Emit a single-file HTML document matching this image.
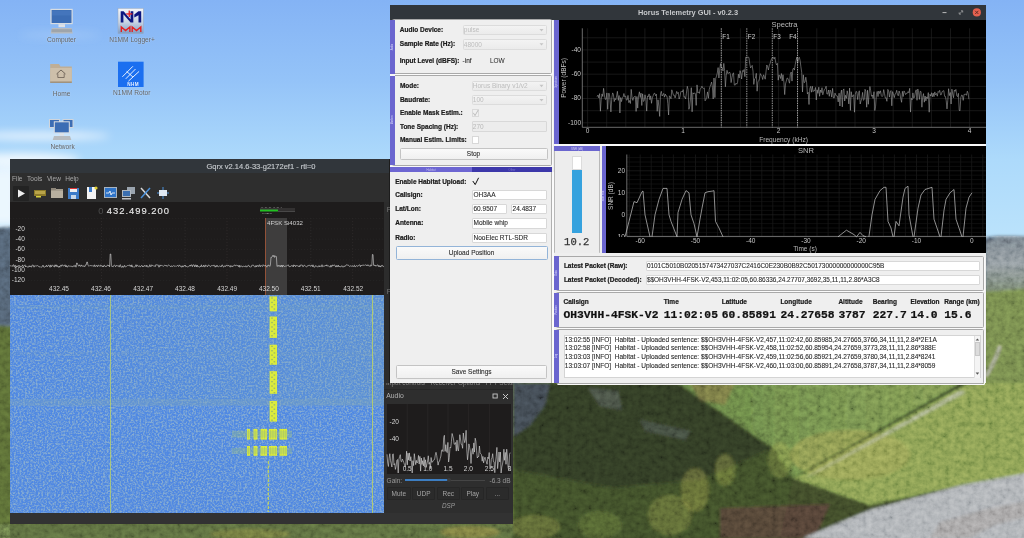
<!DOCTYPE html>
<html><head><meta charset="utf-8">
<style>
*{margin:0;padding:0;box-sizing:border-box}
html,body{width:1024px;height:538px;overflow:hidden;font-family:"Liberation Sans",sans-serif;}
body{position:relative;background:#86b6ee}
.a{position:absolute}
.t{position:absolute;white-space:nowrap;line-height:1}
svg{position:absolute;left:0;top:0}
</style></head><body>
<svg width="1024" height="538" viewBox="0 0 1024 538">
<defs>
<linearGradient id="sky" x1="0" y1="0" x2="0" y2="538" gradientUnits="userSpaceOnUse">
<stop offset="0" stop-color="#84b3f5"/><stop offset="0.149" stop-color="#94c3f8"/><stop offset="0.297" stop-color="#addafb"/><stop offset="0.437" stop-color="#bae2fb"/>
</linearGradient>
<filter id="blur1"><feGaussianBlur stdDeviation="1.8"/></filter>
<filter id="blur6" x="-50%" y="-300%" width="200%" height="700%"><feGaussianBlur stdDeviation="4"/></filter>
<filter id="tex" x="0" y="0" width="100%" height="100%"><feTurbulence type="fractalNoise" baseFrequency="0.25" numOctaves="3" seed="9"/>
<feColorMatrix values="0 0 0 0 0  0 0 0 0 0  0 0 0 0 0  0 0 0 -2.2 1.35"/></filter>
</defs>
<rect width="1024" height="538" fill="url(#sky)"/>
<g filter="url(#blur6)">
<ellipse cx="40" cy="136" rx="70" ry="4" fill="#ffffff" opacity="0.7"/>
<ellipse cx="20" cy="160" rx="60" ry="7" fill="#ffffff" opacity="0.8"/>
<rect x="-10" y="168" width="28" height="58" fill="#eef8fe" opacity="0.95"/>

<ellipse cx="60" cy="35" rx="40" ry="3" fill="#e0eefc" opacity="0.25"/>
</g>
<g filter="url(#blur1)">
<polygon points="-10,228 60,224 200,240 384,250 600,250 900,244 960,240 1000,236 1034,237 1034,548 -10,548" fill="#4e5c6c"/>
<polygon points="-10,325 300,345 513,383 986,290 1034,287 1034,548 -10,548" fill="#556633"/>
<linearGradient id="mtn" x1="0" y1="236" x2="0" y2="292" gradientUnits="userSpaceOnUse"><stop offset="0" stop-color="#6e7882"/><stop offset="0.5" stop-color="#8a949a"/><stop offset="1" stop-color="#6f7c68"/></linearGradient><polygon points="986,242 1000,236 1034,237 1034,289 986,292" fill="url(#mtn)"/>
<polygon points="986,292 1034,288 1034,383 986,383" fill="#6f8348"/>
<path d="M1000,346 Q996,360 986,376" stroke="#b8b8a8" stroke-width="2.5" fill="none"/>
<polygon points="513,383 1034,383 1034,548 513,548" fill="#3a4528"/>
<linearGradient id="lit" x1="678" y1="0" x2="1000" y2="0" gradientUnits="userSpaceOnUse"><stop offset="0" stop-color="#5e7840"/><stop offset="1" stop-color="#7a924e"/></linearGradient>
<polygon points="513,383 678,383 773,448 700,480 613,488 513,470" fill="#2e3823"/>
<polygon points="513,383 550,383 545,405 530,425 513,437" fill="#3c444e"/>
<polygon points="588,388 618,391 622,410 600,406" fill="#5a6264" opacity="0.5"/>
<polygon points="640,420 690,431 686,440 645,431" fill="#535a58" opacity="0.5"/>
<polygon points="678,383 965,383 793,478 773,448" fill="url(#lit)"/>
<polygon points="690,383 735,383 725,405 700,400" fill="#7a6a40" opacity="0.6"/>
<polygon points="965,383 1034,383 1034,473 963,485 870,505 793,478" fill="#80964e"/>
<polygon points="513,470 613,488 700,480 773,448 793,478 780,538 513,538" fill="#3a4a28"/>
<ellipse cx="695" cy="490" rx="14" ry="22" fill="#8a8a40" opacity="0.45"/><ellipse cx="670" cy="515" rx="22" ry="20" fill="#8a8a40" opacity="0.4"/><ellipse cx="725" cy="470" rx="10" ry="16" fill="#8e9444" opacity="0.4"/><ellipse cx="780" cy="460" rx="12" ry="18" fill="#8e9444" opacity="0.35"/>
<ellipse cx="535" cy="527" rx="25" ry="12" fill="#7e803c" opacity="0.45"/>
<ellipse cx="600" cy="525" rx="22" ry="14" fill="#6e7a38" opacity="0.4"/>
<ellipse cx="850" cy="455" rx="60" ry="25" fill="#9a9c50" opacity="0.5"/>
<polygon points="793,478 799,476 968,383 961,383" fill="#2a3620"/>
<polygon points="805,478 812,475 966,392 960,391" fill="#c0c0ac" opacity="0.7"/>
<polygon points="720,508 830,504 815,538 720,538" fill="#553c34" opacity="0.75"/>
<polygon points="803,538 870,510 963,485 1034,472 1034,548" fill="#a8acb0"/>
<polygon points="940,522 990,508 1034,500 1034,515 995,525 970,538 930,538" fill="#8a7a70" opacity="0.3"/>
<polygon points="-10,524 513,524 513,548 -10,548" fill="#56663a"/><ellipse cx="250" cy="534" rx="40" ry="5" fill="#7a7a3a" opacity="0.6"/><ellipse cx="470" cy="532" rx="30" ry="6" fill="#8a8040" opacity="0.6"/>
</g>
<filter id="tex2" x="0" y="0" width="100%" height="100%"><feTurbulence type="fractalNoise" baseFrequency="0.18" numOctaves="3" seed="3"/><feColorMatrix type="saturate" values="0"/><feComponentTransfer><feFuncR type="linear" slope="1.6" intercept="-0.3"/><feFuncG type="linear" slope="1.6" intercept="-0.3"/><feFuncB type="linear" slope="1.6" intercept="-0.3"/><feFuncA type="linear" slope="0" intercept="1"/></feComponentTransfer></filter>
<rect x="513" y="383" width="511" height="155" filter="url(#tex2)" style="mix-blend-mode:overlay" opacity="0.32"/>
<rect x="0" y="225" width="10" height="313" filter="url(#tex2)" style="mix-blend-mode:overlay" opacity="0.28"/>
<rect x="986" y="236" width="38" height="147" filter="url(#tex2)" style="mix-blend-mode:overlay" opacity="0.28"/>
<rect x="0" y="524" width="513" height="14" filter="url(#tex2)" style="mix-blend-mode:overlay" opacity="0.3"/>
</svg>
<svg width="1024" height="538" style="pointer-events:none">
<defs><linearGradient id="n1g" x1="0" y1="0" x2="0" y2="1"><stop offset="0" stop-color="#f4f6fa"/><stop offset="0.55" stop-color="#c8d4e4"/><stop offset="1" stop-color="#7b9cc6"/></linearGradient></defs>
<rect x="50.4" y="8.8" width="22.3" height="15.4" fill="#d8dde2"/>
<rect x="51.6" y="10" width="19.9" height="13" fill="#3c6db4"/>
<rect x="52" y="10.5" width="19" height="5" fill="#4a7cc2" opacity="0.6"/>
<rect x="58.5" y="24.2" width="6.5" height="3" fill="#dfe2e6"/>
<polygon points="52,28 71.5,28 72.8,33.5 50.6,33.5" fill="#b8bcc0"/>
<rect x="51.5" y="29.2" width="20.5" height="3" fill="#9ea4aa"/>
<rect x="118" y="8.4" width="25.3" height="25.1" fill="url(#n1g)" stroke="#9aa8bc" stroke-width="0.5"/>
<path d="M120.7,22.6 L120.7,11.3 L123.6,11.3 L130.6,19.6 L130.6,11.3 L133.3,11.3 L133.3,22.6 L130.6,22.6 L123.4,14.2 L123.4,22.6 Z" fill="#0c1680"/>
<path d="M134.3,14.6 L138.4,11.3 L141.2,11.3 L141.2,22.6 L138.5,22.6 L138.5,15.2 L134.3,17.4 Z" fill="#0c1680"/>
<rect x="126.2" y="13.3" width="6.2" height="1.3" fill="#e52020"/><rect x="128.6" y="10.6" width="1.3" height="6.4" fill="#e52020"/>
<polyline points="121.3,32 121.3,27 125.6,30.5 129.9,27 129.9,32" stroke="#e52020" stroke-width="1.4" fill="none"/>
<polyline points="132.2,32 132.2,27 136.5,30.5 140.8,27 140.8,32" stroke="#e52020" stroke-width="1.4" fill="none"/>
<polygon points="50.2,64 59,64 60.5,66.5 71.8,66.5 71.8,82.7 50.2,82.7" fill="#bfae96"/>
<rect x="50.2" y="68" width="21.6" height="14.7" fill="#cdbfaa"/>
<rect x="50.2" y="81.6" width="21.6" height="1.1" fill="#8f7f6a"/>
<polyline points="56.5,74 61,70 65.5,74" stroke="#5b5048" stroke-width="0.8" fill="none"/>
<polyline points="57.8,73.5 57.8,77.5 64.2,77.5 64.2,73.5" stroke="#5b5048" stroke-width="0.7" fill="none"/>
<rect x="118" y="61.7" width="25.6" height="25.3" fill="#1b6ff0"/>
<g stroke="#ffffff" stroke-width="0.9">
<line x1="122.4" y1="76.8" x2="132.9" y2="66.3"/><line x1="125.8" y1="78.8" x2="135.5" y2="69"/><line x1="128.4" y1="81.2" x2="139.1" y2="71.4"/>
<line x1="126.6" y1="71.4" x2="132.9" y2="77"/>
</g>
<text x="127.2" y="86.2" font-family="Liberation Sans" font-weight="bold" font-size="4.6" letter-spacing="0.5" fill="#e8f0ff">NHM</text>
<rect x="49" y="119" width="11" height="9" fill="#cfd5dc"/><rect x="50" y="120" width="9" height="7" fill="#3c6db4"/>
<rect x="62.5" y="119" width="11" height="9" fill="#cfd5dc"/><rect x="63.5" y="120" width="9" height="7" fill="#3c6db4"/>
<rect x="53.8" y="121.3" width="16" height="12" fill="#d9dde2"/><rect x="54.8" y="122.3" width="14" height="10" fill="#3c6db4"/>
<rect x="59.5" y="133.3" width="4.5" height="2.5" fill="#dfe2e6"/>
<polygon points="54,136 70,136 71.3,140 52.7,140" fill="#b8bcc0"/>
</svg>
<div class="t" style="left:61.50px;transform:translateX(-50%);top:37.16px;font-size:6.6px;color:#5f6266;font-family:'Liberation Sans', sans-serif;text-shadow:0 0 1.5px rgba(255,255,255,0.6);">Computer</div>
<div class="t" style="left:132.00px;transform:translateX(-50%);top:37.16px;font-size:6.6px;color:#5f6266;font-family:'Liberation Sans', sans-serif;text-shadow:0 0 1.5px rgba(255,255,255,0.6);">N1MM Logger+</div>
<div class="t" style="left:61.60px;transform:translateX(-50%);top:90.81px;font-size:6.6px;color:#5f6266;font-family:'Liberation Sans', sans-serif;text-shadow:0 0 1.5px rgba(255,255,255,0.6);">Home</div>
<div class="t" style="left:131.80px;transform:translateX(-50%);top:90.41px;font-size:6.6px;color:#5f6266;font-family:'Liberation Sans', sans-serif;text-shadow:0 0 1.5px rgba(255,255,255,0.6);">N1MM Rotor</div>
<div class="t" style="left:62.60px;transform:translateX(-50%);top:143.91px;font-size:6.6px;color:#5f6266;font-family:'Liberation Sans', sans-serif;text-shadow:0 0 1.5px rgba(255,255,255,0.6);">Network</div>
<div class="a" style="left:10px;top:159px;width:380px;height:365px;background:#2e2e2e"></div>
<div class="a" style="left:10px;top:159px;width:380px;height:14px;background:#31363b"></div>
<div class="t" style="left:206.50px;top:162.85px;font-size:7.5px;color:#c4c8cc;font-family:'Liberation Sans', sans-serif;-webkit-text-stroke:0.15px #c4c8cc;">Gqrx v2.14.6-33-g2172ef1 - rtl=0</div>
<div class="t" style="left:12.00px;top:176.00px;font-size:6.5px;color:#a9a9a9;font-family:'Liberation Sans', sans-serif;">File</div>
<div class="t" style="left:27.10px;top:176.00px;font-size:6.5px;color:#a9a9a9;font-family:'Liberation Sans', sans-serif;">Tools</div>
<div class="t" style="left:46.90px;top:176.00px;font-size:6.5px;color:#a9a9a9;font-family:'Liberation Sans', sans-serif;">View</div>
<div class="t" style="left:65.30px;top:176.00px;font-size:6.5px;color:#a9a9a9;font-family:'Liberation Sans', sans-serif;">Help</div>
<div class="a" style="left:13px;top:186px;width:16px;height:15px;background:#232323;border-radius:1px"></div>
<svg width="1024" height="538" style="pointer-events:none"><polygon points="18,189.5 18,197.5 25,193.5" fill="#eeeeee"/><rect x="34" y="190" width="12" height="6" fill="#8c7a2a"/><rect x="35" y="191" width="10" height="3" fill="#b9a44a"/><rect x="36" y="196" width="5" height="1.5" fill="#d8d040"/><rect x="51" y="189" width="12" height="9" fill="#a59d8e"/><rect x="51" y="188" width="5" height="2" fill="#8f877a"/><rect x="51" y="191" width="12" height="7" fill="#b8b0a0"/><rect x="68" y="188" width="11" height="11" fill="#3d7cc9"/><rect x="70" y="188" width="7" height="4" fill="#f0f0f0"/><rect x="70" y="188" width="7" height="1" fill="#d33"/><rect x="71" y="195" width="5" height="4" fill="#c8d8ea"/><rect x="87" y="187" width="9" height="12" fill="#f4f4f4"/><rect x="89" y="187" width="3" height="5" fill="#3d7cc9"/><circle cx="96" cy="188" r="1.6" fill="#e0d030"/><rect x="104" y="187" width="13" height="11" fill="#a8b4c0"/><rect x="105" y="188" width="11" height="9" fill="#2f74c8"/><polyline points="106,193 109,193 110,191 111,195 112,193 115,193" stroke="#fff" stroke-width="0.8" fill="none"/><rect x="127" y="187" width="8" height="7" fill="#9aa4ae"/><rect x="122" y="190" width="9" height="7" fill="#b0b8c0"/><rect x="123" y="191" width="7" height="5" fill="#3b6fb0"/><rect x="122" y="198" width="9" height="1.5" fill="#c0c4c8"/><line x1="141" y1="188" x2="150" y2="198" stroke="#d8d8d8" stroke-width="1.5"/><line x1="150" y1="188" x2="141" y2="198" stroke="#4a90d9" stroke-width="1.5"/><rect x="159" y="190" width="8" height="6" fill="#d8e4f0"/><line x1="163" y1="187" x2="163" y2="199" stroke="#4a90d9" stroke-width="1"/><line x1="157" y1="193" x2="169" y2="193" stroke="#4a90d9" stroke-width="1"/><rect x="159" y="190" width="8" height="6" fill="#dfe8f2"/></svg>
<div class="a" style="left:10px;top:202px;width:374px;height:93px;background:#1e1c1c"></div>
<div class="a" style="left:384px;top:202px;width:6px;height:322px;background:#2c2c2c"></div>
<div class="a" style="left:389px;top:159px;width:1px;height:365px;background:#1c1c1c"></div>
<div class="t" style="left:386.80px;top:206.50px;font-size:6.5px;color:#777;font-family:'Liberation Sans', sans-serif;">F</div>
<div class="t" style="left:386.80px;top:288.50px;font-size:6.5px;color:#777;font-family:'Liberation Sans', sans-serif;">P</div>
<div class="t" style="left:98.30px;top:206.04px;font-size:9.4px;color:#4c4c4c;font-family:'Liberation Sans', sans-serif;">0</div>
<div class="t" style="left:106.80px;top:206.04px;font-size:9.4px;color:#e6e6e6;font-family:'Liberation Sans', sans-serif;letter-spacing:1.0px;-webkit-text-stroke:0.15px #e6e6e6;">432.499.200</div>
<svg width="1024" height="538" style="pointer-events:none"><line x1="59.8" y1="218" x2="59.8" y2="284" stroke="#353333" stroke-width="0.6" stroke-dasharray="1.2,1.8"/><line x1="101.5" y1="218" x2="101.5" y2="284" stroke="#353333" stroke-width="0.6" stroke-dasharray="1.2,1.8"/><line x1="143.3" y1="218" x2="143.3" y2="284" stroke="#353333" stroke-width="0.6" stroke-dasharray="1.2,1.8"/><line x1="185.1" y1="218" x2="185.1" y2="284" stroke="#353333" stroke-width="0.6" stroke-dasharray="1.2,1.8"/><line x1="227" y1="218" x2="227" y2="284" stroke="#353333" stroke-width="0.6" stroke-dasharray="1.2,1.8"/><line x1="268.9" y1="218" x2="268.9" y2="284" stroke="#353333" stroke-width="0.6" stroke-dasharray="1.2,1.8"/><line x1="310.8" y1="218" x2="310.8" y2="284" stroke="#353333" stroke-width="0.6" stroke-dasharray="1.2,1.8"/><line x1="352.7" y1="218" x2="352.7" y2="284" stroke="#353333" stroke-width="0.6" stroke-dasharray="1.2,1.8"/><line x1="10" y1="218.4" x2="384" y2="218.4" stroke="#2a2828" stroke-width="0.6" stroke-dasharray="1.2,1.8"/><line x1="10" y1="228.8" x2="384" y2="228.8" stroke="#2a2828" stroke-width="0.6" stroke-dasharray="1.2,1.8"/><line x1="10" y1="239.1" x2="384" y2="239.1" stroke="#2a2828" stroke-width="0.6" stroke-dasharray="1.2,1.8"/><line x1="10" y1="249.5" x2="384" y2="249.5" stroke="#2a2828" stroke-width="0.6" stroke-dasharray="1.2,1.8"/><line x1="10" y1="259.9" x2="384" y2="259.9" stroke="#2a2828" stroke-width="0.6" stroke-dasharray="1.2,1.8"/><line x1="10" y1="270.2" x2="384" y2="270.2" stroke="#2a2828" stroke-width="0.6" stroke-dasharray="1.2,1.8"/><line x1="10" y1="280.6" x2="384" y2="280.6" stroke="#2a2828" stroke-width="0.6" stroke-dasharray="1.2,1.8"/><rect x="266" y="218" width="21" height="77" fill="#3e3d3d"/><line x1="265.5" y1="218" x2="265.5" y2="295" stroke="#b06040" stroke-width="0.8"/><rect x="260" y="209.5" width="18" height="2" fill="#22c022"/><line x1="278" y1="211.2" x2="295" y2="211.2" stroke="#888" stroke-width="0.6"/><line x1="260" y1="209" x2="295" y2="209" stroke="#888" stroke-width="0.4"/><polyline points="10.0,265.3 10.6,266.1 11.2,265.7 11.8,266.3 12.4,266.3 13.0,264.9 13.6,264.7 14.2,266.9 14.8,265.4 15.4,265.3 16.0,267.3 16.6,265.9 17.2,266.9 17.8,265.9 18.4,266.4 19.0,265.1 19.6,266.4 20.2,267.0 20.8,266.1 21.4,266.6 22.0,266.4 22.6,264.9 23.2,266.7 23.8,266.2 24.4,265.5 25.0,264.8 25.6,267.0 26.2,265.9 26.8,266.6 27.4,267.0 28.0,266.6 28.6,267.1 29.2,265.7 29.8,266.8 30.4,265.9 31.0,267.1 31.6,267.0 32.2,265.0 32.8,265.1 33.4,265.3 34.0,267.2 34.6,265.8 35.2,266.3 35.8,265.5 36.4,266.0 37.0,265.7 37.6,265.6 38.2,266.2 38.8,266.2 39.4,267.1 40.0,266.5 40.6,267.1 41.2,266.9 41.8,267.3 42.4,266.4 43.0,265.1 43.6,266.9 44.2,267.2 44.8,267.1 45.4,266.2 46.0,266.6 46.6,265.2 47.2,266.9 47.8,266.2 48.4,265.4 49.0,264.9 49.6,266.9 50.2,267.3 50.8,264.9 51.4,266.8 52.0,265.8 52.6,265.1 53.2,265.5 53.8,266.7 54.4,267.0 55.0,264.8 55.6,266.3 56.2,264.8 56.8,266.6 57.4,265.6 58.0,267.0 58.6,267.2 59.2,266.0 59.8,267.3 60.4,265.5 61.0,264.9 61.6,266.3 62.2,264.8 62.8,265.2 63.4,265.8 64.0,266.3 64.6,265.1 65.2,264.8 65.8,267.0 66.4,265.5 67.0,267.2 67.6,267.0 68.2,265.7 68.8,265.9 69.4,266.1 70.0,266.4 70.6,266.2 71.2,266.2 71.8,266.3 72.4,267.1 73.0,266.0 73.6,265.8 74.2,266.6 74.8,265.3 75.4,265.5 76.0,267.2 76.6,263.0 77.2,263.0 77.8,264.7 78.4,265.8 79.0,266.2 79.6,264.8 80.2,266.3 80.8,266.3 81.4,264.9 82.0,266.3 82.6,265.9 83.2,266.5 83.8,265.6 84.4,266.5 85.0,266.6 85.6,264.8 86.2,264.9 86.8,262.0 87.4,262.0 88.0,265.4 88.6,265.9 89.2,266.2 89.8,265.5 90.4,265.6 91.0,265.5 91.6,265.7 92.2,266.2 92.8,265.5 93.4,265.7 94.0,266.7 94.6,264.8 95.2,266.2 95.8,266.6 96.4,265.5 97.0,265.3 97.6,266.8 98.2,265.3 98.8,265.2 99.4,265.8 100.0,266.5 100.6,265.0 101.2,265.5 101.8,265.6 102.4,266.9 103.0,265.8 103.6,266.9 104.2,265.1 104.8,265.6 105.4,266.4 106.0,267.0 106.6,265.9 107.2,265.3 107.8,265.0 108.4,266.1 109.0,265.2 109.6,266.8 110.2,254.0 110.8,254.0 111.4,265.4 112.0,266.8 112.6,266.4 113.2,266.8 113.8,265.6 114.4,265.0 115.0,265.5 115.6,266.8 116.2,265.4 116.8,265.6 117.4,265.8 118.0,265.8 118.6,265.8 119.2,267.1 119.8,265.1 120.4,264.7 121.0,267.2 121.6,267.0 122.2,267.3 122.8,265.8 123.4,267.2 124.0,267.1 124.6,265.3 125.2,266.6 125.8,266.9 126.4,266.4 127.0,266.0 127.6,265.5 128.2,265.6 128.8,265.3 129.4,264.9 130.0,266.2 130.6,265.4 131.2,266.8 131.8,264.8 132.4,267.0 133.0,266.5 133.6,267.1 134.2,267.0 134.8,267.0 135.4,266.2 136.0,264.7 136.6,266.6 137.2,265.1 137.8,265.5 138.4,266.4 139.0,266.1 139.6,265.8 140.2,267.1 140.8,266.3 141.4,265.6 142.0,265.4 142.6,266.9 143.2,265.9 143.8,266.7 144.4,265.6 145.0,265.2 145.6,266.1 146.2,266.8 146.8,265.1 147.4,266.8 148.0,267.1 148.6,266.8 149.2,266.8 149.8,264.7 150.4,266.3 151.0,266.9 151.6,264.8 152.2,265.4 152.8,265.4 153.4,266.1 154.0,265.8 154.6,265.9 155.2,266.7 155.8,264.7 156.4,264.8 157.0,265.0 157.6,265.0 158.2,264.9 158.8,267.2 159.4,266.9 160.0,264.9 160.6,266.0 161.2,265.5 161.8,265.5 162.4,265.6 163.0,266.4 163.6,266.2 164.2,265.6 164.8,265.2 165.4,265.6 166.0,265.0 166.6,266.1 167.2,266.6 167.8,265.7 168.4,264.9 169.0,265.2 169.6,265.7 170.2,266.3 170.8,266.7 171.4,265.7 172.0,266.8 172.6,266.3 173.2,265.8 173.8,265.7 174.4,266.0 175.0,266.5 175.6,265.8 176.2,266.5 176.8,265.9 177.4,265.3 178.0,266.1 178.6,266.5 179.2,264.9 179.8,265.8 180.4,265.8 181.0,267.0 181.6,267.1 182.2,265.7 182.8,267.0 183.4,266.8 184.0,265.4 184.6,265.9 185.2,265.0 185.8,266.8 186.4,266.4 187.0,267.0 187.6,266.8 188.2,266.4 188.8,266.6 189.4,266.2 190.0,265.0 190.6,266.2 191.2,264.7 191.8,265.1 192.4,266.7 193.0,264.8 193.6,264.9 194.2,265.0 194.8,267.0 195.4,265.2 196.0,264.8 196.6,266.9 197.2,265.0 197.8,266.9 198.4,266.5 199.0,266.9 199.6,267.2 200.2,266.2 200.8,266.8 201.4,264.8 202.0,266.7 202.6,266.0 203.2,266.6 203.8,265.0 204.4,266.6 205.0,267.1 205.6,264.9 206.2,265.5 206.8,266.2 207.4,266.9 208.0,265.3 208.6,265.2 209.2,265.3 209.8,266.3 210.4,266.7 211.0,265.7 211.6,265.7 212.2,265.7 212.8,265.6 213.4,265.8 214.0,264.9 214.6,266.0 215.2,267.2 215.8,265.8 216.4,266.6 217.0,265.1 217.6,266.5 218.2,266.7 218.8,266.5 219.4,266.0 220.0,266.0 220.6,266.4 221.2,267.0 221.8,265.1 222.4,264.9 223.0,266.6 223.6,267.1 224.2,266.0 224.8,265.9 225.4,266.6 226.0,265.2 226.6,265.4 227.2,265.2 227.8,266.2 228.4,265.5 229.0,265.3 229.6,266.5 230.2,267.2 230.8,265.5 231.4,266.5 232.0,265.8 232.6,266.9 233.2,266.2 233.8,265.4 234.4,265.3 235.0,264.8 235.6,265.9 236.2,265.7 236.8,265.1 237.4,265.6 238.0,265.5 238.6,266.7 239.2,265.1 239.8,267.3 240.4,265.9 241.0,266.3 241.6,265.9 242.2,266.9 242.8,266.8 243.4,266.1 244.0,266.0 244.6,266.6 245.2,266.9 245.8,265.7 246.4,266.6 247.0,267.2 247.6,265.9 248.2,265.3 248.8,265.3 249.4,266.6 250.0,266.5 250.6,267.2 251.2,266.9 251.8,265.3 252.4,265.2 253.0,265.4 253.6,265.2 254.2,266.5 254.8,266.9 255.4,267.0 256.0,265.4 256.6,266.9 257.2,265.5 257.8,265.8 258.4,266.6 259.0,264.9 259.6,264.9 260.2,266.9 260.8,265.5 261.4,265.6 262.0,266.2 262.6,266.5 263.2,264.7 263.8,265.6 264.4,265.8 265.0,266.0 265.6,265.2 266.2,266.2 266.8,267.2 267.4,265.7 268.0,266.1 268.6,265.0 269.2,265.4 269.8,266.4 270.4,265.0 271.0,257.2 271.6,257.3 272.2,256.8 272.8,255.4 273.4,256.5 274.0,255.3 274.6,257.4 275.2,256.1 275.8,256.0 276.4,256.7 277.0,266.5 277.6,266.2 278.2,265.2 278.8,266.4 279.4,266.3 280.0,265.2 280.6,267.0 281.2,266.4 281.8,265.0 282.4,267.1 283.0,265.1 283.6,265.6 284.2,266.6 284.8,266.3 285.4,266.1 286.0,266.4 286.6,265.9 287.2,265.5 287.8,265.2 288.4,264.9 289.0,266.6 289.6,266.7 290.2,266.1 290.8,266.6 291.4,265.6 292.0,265.4 292.6,265.7 293.2,267.0 293.8,264.8 294.4,266.0 295.0,265.3 295.6,266.7 296.2,265.6 296.8,265.6 297.4,265.7 298.0,266.1 298.6,266.7 299.2,265.6 299.8,266.9 300.4,265.0 301.0,265.4 301.6,265.0 302.2,265.0 302.8,266.7 303.4,266.6 304.0,265.2 304.6,265.2 305.2,265.8 305.8,266.6 306.4,266.8 307.0,266.6 307.6,266.2 308.2,265.1 308.8,265.7 309.4,265.2 310.0,266.1 310.6,266.2 311.2,265.2 311.8,265.4 312.4,266.7 313.0,264.8 313.6,266.8 314.2,267.0 314.8,267.2 315.4,265.7 316.0,266.1 316.6,266.2 317.2,266.3 317.8,267.2 318.4,266.5 319.0,265.5 319.6,266.9 320.2,266.0 320.8,266.3 321.4,266.6 322.0,264.7 322.6,266.7 323.2,266.4 323.8,266.0 324.4,266.1 325.0,265.9 325.6,265.2 326.2,266.1 326.8,264.8 327.4,266.0 328.0,266.4 328.6,265.9 329.2,266.2 329.8,267.2 330.4,267.0 331.0,265.1 331.6,266.8 332.2,266.3 332.8,264.8 333.4,265.6 334.0,265.3 334.6,264.9 335.2,266.1 335.8,267.1 336.4,265.5 337.0,267.0 337.6,266.5 338.2,265.0 338.8,266.9 339.4,266.3 340.0,267.1 340.6,266.6 341.2,266.6 341.8,265.6 342.4,266.8 343.0,267.1 343.6,266.9 344.2,265.8 344.8,266.7 345.4,266.0 346.0,265.0 346.6,264.8 347.2,264.9 347.8,265.2 348.4,265.1 349.0,266.0 349.6,266.5 350.2,266.1 350.8,265.8 351.4,266.4 352.0,265.5 352.6,265.9 353.2,266.7 353.8,265.7 354.4,265.2 355.0,267.0 355.6,266.6 356.2,265.7 356.8,265.7 357.4,266.1 358.0,266.3 358.6,265.3 359.2,264.7 359.8,265.2 360.4,266.7 361.0,265.1 361.6,265.9 362.2,265.2 362.8,265.2 363.4,265.1 364.0,265.7 364.6,265.1 365.2,264.8 365.8,265.0 366.4,265.1 367.0,266.0 367.6,264.9 368.2,264.8 368.8,265.9 369.4,265.8 370.0,266.5 370.6,264.8 371.2,265.7 371.8,265.7 372.4,254.5 373.0,254.5 373.6,265.3 374.2,264.9 374.8,265.9 375.4,265.1 376.0,266.3 376.6,265.6 377.2,265.0 377.8,264.8 378.4,266.6 379.0,265.4 379.6,266.7 380.2,265.9 380.8,267.1 381.4,265.5 382.0,265.3 382.6,265.4 383.2,266.8 383.8,266.3" stroke="#d8d8d8" stroke-width="0.6" fill="none"/></svg>
<div class="t" style="left:260.00px;top:205.55px;font-size:2.3px;color:#999;font-family:'Liberation Sans', sans-serif;">-96 -86 -81 -41 -26 -1</div>
<div class="t" style="left:261.00px;top:212.88px;font-size:2.5px;color:#aaa;font-family:'Liberation Sans', sans-serif;">-47 dBFS</div>
<div class="t" style="left:267.00px;top:220.04px;font-size:6.1px;color:#d0d0d0;font-family:'Liberation Sans', sans-serif;">4FSK Si4032</div>
<div class="t" style="right:999.20px;top:225.60px;font-size:6.5px;color:#d6d6d6;font-family:'Liberation Sans', sans-serif;">-20</div>
<div class="t" style="right:999.20px;top:235.90px;font-size:6.5px;color:#d6d6d6;font-family:'Liberation Sans', sans-serif;">-40</div>
<div class="t" style="right:999.20px;top:246.30px;font-size:6.5px;color:#d6d6d6;font-family:'Liberation Sans', sans-serif;">-60</div>
<div class="t" style="right:999.20px;top:256.70px;font-size:6.5px;color:#d6d6d6;font-family:'Liberation Sans', sans-serif;">-80</div>
<div class="t" style="right:999.20px;top:267.00px;font-size:6.5px;color:#d6d6d6;font-family:'Liberation Sans', sans-serif;">-100</div>
<div class="t" style="right:999.20px;top:277.40px;font-size:6.5px;color:#d6d6d6;font-family:'Liberation Sans', sans-serif;">-120</div>
<div class="t" style="left:59.00px;transform:translateX(-50%);top:286.30px;font-size:6.5px;color:#d6d6d6;font-family:'Liberation Sans', sans-serif;">432.45</div>
<div class="t" style="left:101.00px;transform:translateX(-50%);top:286.30px;font-size:6.5px;color:#d6d6d6;font-family:'Liberation Sans', sans-serif;">432.46</div>
<div class="t" style="left:143.10px;transform:translateX(-50%);top:286.30px;font-size:6.5px;color:#d6d6d6;font-family:'Liberation Sans', sans-serif;">432.47</div>
<div class="t" style="left:185.00px;transform:translateX(-50%);top:286.30px;font-size:6.5px;color:#d6d6d6;font-family:'Liberation Sans', sans-serif;">432.48</div>
<div class="t" style="left:227.10px;transform:translateX(-50%);top:286.30px;font-size:6.5px;color:#d6d6d6;font-family:'Liberation Sans', sans-serif;">432.49</div>
<div class="t" style="left:268.90px;transform:translateX(-50%);top:286.30px;font-size:6.5px;color:#d6d6d6;font-family:'Liberation Sans', sans-serif;">432.50</div>
<div class="t" style="left:310.80px;transform:translateX(-50%);top:286.30px;font-size:6.5px;color:#d6d6d6;font-family:'Liberation Sans', sans-serif;">432.51</div>
<div class="t" style="left:353.20px;transform:translateX(-50%);top:286.30px;font-size:6.5px;color:#d6d6d6;font-family:'Liberation Sans', sans-serif;">432.52</div>
<svg width="1024" height="538" style="pointer-events:none"><defs><filter id="wn" x="0" y="0" width="100%" height="100%"><feTurbulence type="fractalNoise" baseFrequency="0.55" numOctaves="2" seed="4"/><feColorMatrix values="0 0 0 0 0.52  0 0 0 0 0.64  0 0 0 0 0.54  0 0 0 3 -1.2"/></filter><filter id="wb" x="0" y="0" width="100%" height="100%"><feGaussianBlur stdDeviation="0.5"/></filter><linearGradient id="wfg" x1="0" y1="0" x2="0" y2="1"><stop offset="0" stop-color="#5088e2"/><stop offset="0.5" stop-color="#5089e3"/><stop offset="1" stop-color="#5088e2"/></linearGradient></defs><rect x="10" y="295" width="374" height="218" fill="url(#wfg)"/><rect x="10" y="295" width="374" height="218" filter="url(#wn)" opacity="0.5"/><linearGradient id="wfr" x1="0" y1="0" x2="1" y2="0"><stop offset="0" stop-color="#6a9ab8" stop-opacity="0"/><stop offset="1" stop-color="#7aa4b0" stop-opacity="0.25"/></linearGradient><rect x="10" y="295" width="374" height="110" fill="url(#wfr)"/><rect x="10" y="399" width="374" height="7" fill="#7aa4c0" opacity="0.35"/><rect x="10" y="305" width="374" height="4" fill="#7aa4c0" opacity="0.2"/><rect x="10" y="352" width="374" height="4" fill="#7aa4c0" opacity="0.15"/><line x1="110.6" y1="295" x2="110.6" y2="513" stroke="#c8dc50" stroke-width="0.8" opacity="0.9"/><line x1="372.5" y1="295" x2="372.5" y2="513" stroke="#c8dc50" stroke-width="0.8" opacity="0.9"/><rect x="269.6" y="296.4" width="7.4" height="15.0" fill="#dcec3c"/><rect x="271.2" y="297.4" width="1.6" height="1.3" fill="#9cb868"/><rect x="273.6" y="299.6" width="1.6" height="1.3" fill="#9cb868"/><rect x="271.2" y="301.8" width="1.6" height="1.3" fill="#9cb868"/><rect x="273.6" y="304.0" width="1.6" height="1.3" fill="#9cb868"/><rect x="271.2" y="306.2" width="1.6" height="1.3" fill="#9cb868"/><rect x="273.6" y="308.4" width="1.6" height="1.3" fill="#9cb868"/><rect x="269.6" y="316.5" width="7.4" height="21.4" fill="#dcec3c"/><rect x="271.2" y="317.5" width="1.6" height="1.3" fill="#9cb868"/><rect x="273.6" y="319.7" width="1.6" height="1.3" fill="#9cb868"/><rect x="271.2" y="321.9" width="1.6" height="1.3" fill="#9cb868"/><rect x="273.6" y="324.1" width="1.6" height="1.3" fill="#9cb868"/><rect x="271.2" y="326.3" width="1.6" height="1.3" fill="#9cb868"/><rect x="273.6" y="328.5" width="1.6" height="1.3" fill="#9cb868"/><rect x="271.2" y="330.7" width="1.6" height="1.3" fill="#9cb868"/><rect x="273.6" y="332.9" width="1.6" height="1.3" fill="#9cb868"/><rect x="271.2" y="335.1" width="1.6" height="1.3" fill="#9cb868"/><rect x="269.6" y="344.7" width="7.4" height="20.1" fill="#dcec3c"/><rect x="271.2" y="345.7" width="1.6" height="1.3" fill="#9cb868"/><rect x="273.6" y="347.9" width="1.6" height="1.3" fill="#9cb868"/><rect x="271.2" y="350.1" width="1.6" height="1.3" fill="#9cb868"/><rect x="273.6" y="352.3" width="1.6" height="1.3" fill="#9cb868"/><rect x="271.2" y="354.5" width="1.6" height="1.3" fill="#9cb868"/><rect x="273.6" y="356.7" width="1.6" height="1.3" fill="#9cb868"/><rect x="271.2" y="358.9" width="1.6" height="1.3" fill="#9cb868"/><rect x="273.6" y="361.1" width="1.6" height="1.3" fill="#9cb868"/><rect x="271.2" y="363.3" width="1.6" height="1.3" fill="#9cb868"/><rect x="269.6" y="371.2" width="7.4" height="22.6" fill="#dcec3c"/><rect x="271.2" y="372.2" width="1.6" height="1.3" fill="#9cb868"/><rect x="273.6" y="374.4" width="1.6" height="1.3" fill="#9cb868"/><rect x="271.2" y="376.6" width="1.6" height="1.3" fill="#9cb868"/><rect x="273.6" y="378.8" width="1.6" height="1.3" fill="#9cb868"/><rect x="271.2" y="381.0" width="1.6" height="1.3" fill="#9cb868"/><rect x="273.6" y="383.2" width="1.6" height="1.3" fill="#9cb868"/><rect x="271.2" y="385.4" width="1.6" height="1.3" fill="#9cb868"/><rect x="273.6" y="387.6" width="1.6" height="1.3" fill="#9cb868"/><rect x="271.2" y="389.8" width="1.6" height="1.3" fill="#9cb868"/><rect x="273.6" y="392.0" width="1.6" height="1.3" fill="#9cb868"/><rect x="269.6" y="401" width="7.4" height="20.6" fill="#dcec3c"/><rect x="271.2" y="402.0" width="1.6" height="1.3" fill="#9cb868"/><rect x="273.6" y="404.2" width="1.6" height="1.3" fill="#9cb868"/><rect x="271.2" y="406.4" width="1.6" height="1.3" fill="#9cb868"/><rect x="273.6" y="408.6" width="1.6" height="1.3" fill="#9cb868"/><rect x="271.2" y="410.8" width="1.6" height="1.3" fill="#9cb868"/><rect x="273.6" y="413.0" width="1.6" height="1.3" fill="#9cb868"/><rect x="271.2" y="415.2" width="1.6" height="1.3" fill="#9cb868"/><rect x="273.6" y="417.4" width="1.6" height="1.3" fill="#9cb868"/><rect x="271.2" y="419.6" width="1.6" height="1.3" fill="#9cb868"/><rect x="247" y="428.9" width="3" height="10.7" fill="#dcec3c"/><rect x="248.2" y="429.9" width="0.7" height="8.7" fill="#a8c060" opacity="0.7"/><rect x="253.5" y="428.9" width="4.0" height="10.7" fill="#dcec3c"/><rect x="254.7" y="429.9" width="0.7" height="8.7" fill="#a8c060" opacity="0.7"/><rect x="260.5" y="428.9" width="6.5" height="10.7" fill="#dcec3c"/><rect x="261.7" y="429.9" width="0.7" height="8.7" fill="#a8c060" opacity="0.7"/><rect x="264.1" y="429.9" width="0.7" height="8.7" fill="#a8c060" opacity="0.7"/><rect x="269" y="428.9" width="8" height="10.7" fill="#dcec3c"/><rect x="270.2" y="429.9" width="0.7" height="8.7" fill="#a8c060" opacity="0.7"/><rect x="272.6" y="429.9" width="0.7" height="8.7" fill="#a8c060" opacity="0.7"/><rect x="275.0" y="429.9" width="0.7" height="8.7" fill="#a8c060" opacity="0.7"/><rect x="279.5" y="428.9" width="7.5" height="10.7" fill="#dcec3c"/><rect x="280.7" y="429.9" width="0.7" height="8.7" fill="#a8c060" opacity="0.7"/><rect x="283.1" y="429.9" width="0.7" height="8.7" fill="#a8c060" opacity="0.7"/><rect x="285.5" y="429.9" width="0.7" height="8.7" fill="#a8c060" opacity="0.7"/><rect x="232" y="430.9" width="60" height="6.7" fill="#9cc080" opacity="0.35"/><rect x="247" y="446" width="3" height="9.8" fill="#dcec3c"/><rect x="248.2" y="447" width="0.7" height="7.8" fill="#a8c060" opacity="0.7"/><rect x="253.5" y="446" width="4.0" height="9.8" fill="#dcec3c"/><rect x="254.7" y="447" width="0.7" height="7.8" fill="#a8c060" opacity="0.7"/><rect x="260.5" y="446" width="6.5" height="9.8" fill="#dcec3c"/><rect x="261.7" y="447" width="0.7" height="7.8" fill="#a8c060" opacity="0.7"/><rect x="264.1" y="447" width="0.7" height="7.8" fill="#a8c060" opacity="0.7"/><rect x="269" y="446" width="8" height="9.8" fill="#dcec3c"/><rect x="270.2" y="447" width="0.7" height="7.8" fill="#a8c060" opacity="0.7"/><rect x="272.6" y="447" width="0.7" height="7.8" fill="#a8c060" opacity="0.7"/><rect x="275.0" y="447" width="0.7" height="7.8" fill="#a8c060" opacity="0.7"/><rect x="279.5" y="446" width="7.5" height="9.8" fill="#dcec3c"/><rect x="280.7" y="447" width="0.7" height="7.8" fill="#a8c060" opacity="0.7"/><rect x="283.1" y="447" width="0.7" height="7.8" fill="#a8c060" opacity="0.7"/><rect x="285.5" y="447" width="0.7" height="7.8" fill="#a8c060" opacity="0.7"/><rect x="232" y="448" width="60" height="5.8" fill="#9cc080" opacity="0.35"/><line x1="268.3" y1="461" x2="268.3" y2="512" stroke="#d4e040" stroke-width="1" stroke-dasharray="3,1.5"/></svg>
<div class="a" style="left:10px;top:513px;width:380px;height:11px;background:#323232"></div>
<div class="a" style="left:384px;top:383px;width:129px;height:141px;background:#2e2e2e"></div>
<div class="a" style="left:384px;top:383px;width:129px;height:6px;overflow:hidden">
<div class="t" style="left:2px;top:-3.5px;font-size:6.5px;color:#8a8a8a">Input controls &nbsp; Receiver Options &nbsp; FFT Settings</div></div>
<div class="a" style="left:384px;top:389px;width:129px;height:1px;background:#262626"></div>
<div class="t" style="left:386.30px;top:393.04px;font-size:6.8px;color:#b4b4b4;font-family:'Liberation Sans', sans-serif;">Audio</div>
<svg width="1024" height="538" style="pointer-events:none"><rect x="493" y="394" width="4.2" height="4" fill="none" stroke="#c8c8c8" stroke-width="0.9"/><line x1="503" y1="394" x2="508" y2="399" stroke="#c8c8c8" stroke-width="1"/><line x1="508" y1="394" x2="503" y2="399" stroke="#c8c8c8" stroke-width="1"/></svg>
<div class="a" style="left:387px;top:404px;width:124px;height:69.5px;background:#1e1c1c"></div>
<svg width="1024" height="538" style="pointer-events:none"><line x1="407.2" y1="404" x2="407.2" y2="473" stroke="#2c2a2a" stroke-width="0.7"/><line x1="427.8" y1="404" x2="427.8" y2="473" stroke="#2c2a2a" stroke-width="0.7"/><line x1="448" y1="404" x2="448" y2="473" stroke="#2c2a2a" stroke-width="0.7"/><line x1="468.4" y1="404" x2="468.4" y2="473" stroke="#2c2a2a" stroke-width="0.7"/><line x1="489.4" y1="404" x2="489.4" y2="473" stroke="#2c2a2a" stroke-width="0.7"/><polyline points="387.0,454.3 387.7,463.1 388.4,466.5 389.1,458.2 389.8,453.7 390.5,460.6 391.2,463.6 391.9,467.0 392.6,454.3 393.3,453.9 394.0,464.9 394.7,463.6 395.4,469.4 396.1,466.4 396.8,460.4 397.5,459.5 398.2,473.0 398.9,459.4 399.6,456.7 400.3,454.7 401.0,461.5 401.7,461.8 402.4,459.1 403.1,460.7 403.8,462.5 404.5,464.8 405.2,467.0 405.9,462.2 406.6,451.2 407.3,464.9 408.0,453.2 408.7,460.1 409.4,452.9 410.1,461.0 410.8,456.7 411.5,462.2 412.2,473.0 412.9,460.7 413.6,465.6 414.3,453.7 415.0,459.4 415.7,464.6 416.4,460.4 417.1,463.0 417.8,461.5 418.5,455.4 419.2,464.0 419.9,456.4 420.6,471.1 421.3,458.0 422.0,464.5 422.7,460.7 423.4,465.9 424.1,457.3 424.8,466.1 425.5,459.8 426.2,467.4 426.9,463.8 427.6,461.0 428.3,455.8 429.0,464.2 429.7,462.4 430.4,468.7 431.1,457.5 431.8,462.4 432.5,462.0 433.2,460.5 433.9,459.9 434.6,459.5 435.3,454.9 436.0,452.3 436.7,455.4 437.4,460.4 438.1,465.1 438.8,461.6 439.5,461.3 440.2,458.5 440.9,456.0 441.6,450.2 442.3,449.7 443.0,451.6 443.7,437.6 444.4,435.3 445.1,451.4 445.8,444.7 446.5,451.3 447.2,452.6 447.9,442.4 448.6,462.0 449.3,457.5 450.0,447.1 450.7,447.9 451.4,441.7 452.1,433.5 452.8,436.2 453.5,438.9 454.2,444.3 454.9,444.1 455.6,442.5 456.3,451.1 457.0,440.2 457.7,449.1 458.4,451.0 459.1,443.2 459.8,434.7 460.5,439.0 461.2,444.3 461.9,444.4 462.6,448.3 463.3,433.0 464.0,438.2 464.7,442.7 465.4,440.2 466.1,430.3 466.8,449.9 467.5,459.8 468.2,453.7 468.9,443.9 469.6,447.3 470.3,451.1 471.0,463.5 471.7,452.6 472.4,448.4 473.1,454.2 473.8,442.9 474.5,452.1 475.2,438.2 475.9,441.2 476.6,450.8 477.3,458.0 478.0,456.5 478.7,456.5 479.4,446.0 480.1,452.8 480.8,453.9 481.5,454.7 482.2,461.2 482.9,456.4 483.6,462.9 484.3,459.2 485.0,457.2 485.7,459.9 486.4,461.8 487.1,464.3 487.8,457.1 488.5,458.6 489.2,452.5 489.9,469.0 490.6,468.3 491.3,459.4 492.0,457.8 492.7,453.7 493.4,461.5 494.1,461.8 494.8,472.7 495.5,462.1 496.2,456.5 496.9,447.4 497.6,468.6 498.3,461.9 499.0,452.0 499.7,461.9 500.4,452.1 501.1,473.0 501.8,467.1 502.5,464.1 503.2,460.0 503.9,449.2 504.6,460.3 505.3,452.4 506.0,464.3 506.7,449.2 507.4,456.0 508.1,467.7 508.8,470.0 509.5,454.5 510.2,452.6" stroke="#d8d8d8" stroke-width="0.6" fill="none"/></svg>
<div class="t" style="right:625.00px;top:419.20px;font-size:6.5px;color:#d6d6d6;font-family:'Liberation Sans', sans-serif;">-20</div>
<div class="t" style="right:625.00px;top:436.40px;font-size:6.5px;color:#d6d6d6;font-family:'Liberation Sans', sans-serif;">-40</div>
<div class="t" style="left:407.20px;transform:translateX(-50%);top:466.00px;font-size:6.5px;color:#d6d6d6;font-family:'Liberation Sans', sans-serif;">0.5</div>
<div class="t" style="left:427.80px;transform:translateX(-50%);top:466.00px;font-size:6.5px;color:#d6d6d6;font-family:'Liberation Sans', sans-serif;">1.0</div>
<div class="t" style="left:448.00px;transform:translateX(-50%);top:466.00px;font-size:6.5px;color:#d6d6d6;font-family:'Liberation Sans', sans-serif;">1.5</div>
<div class="t" style="left:468.40px;transform:translateX(-50%);top:466.00px;font-size:6.5px;color:#d6d6d6;font-family:'Liberation Sans', sans-serif;">2.0</div>
<div class="t" style="left:489.40px;transform:translateX(-50%);top:466.00px;font-size:6.5px;color:#d6d6d6;font-family:'Liberation Sans', sans-serif;">2.5</div>
<div class="t" style="left:509.50px;transform:translateX(-50%);top:466.00px;font-size:6.5px;color:#d6d6d6;font-family:'Liberation Sans', sans-serif;">3</div>
<div class="t" style="left:386.60px;top:477.50px;font-size:6.5px;color:#9a9a9a;font-family:'Liberation Sans', sans-serif;">Gain:</div>
<div class="a" style="left:405px;top:479.5px;width:80px;height:1.0px;background:#454545"></div>
<div class="a" style="left:405px;top:479.3px;width:44.39999999999998px;height:1.3999999999999773px;background:#3d7ec2"></div>
<div class="a" style="left:447px;top:478px;width:4px;height:4px;border-radius:2px;background:#3a3a3a"></div>
<div class="t" style="right:513.50px;top:477.50px;font-size:6.5px;color:#9a9a9a;font-family:'Liberation Sans', sans-serif;">-6.3 dB</div>
<div class="a" style="left:386.9px;top:486.8px;width:23.80000000000001px;height:13.099999999999966px;background:#2b2b2b;border:0.6px solid #262626;border-radius:1px"></div>
<div class="t" style="left:398.80px;transform:translateX(-50%);top:490.50px;font-size:6.5px;color:#a4a4a4;font-family:'Liberation Sans', sans-serif;">Mute</div>
<div class="a" style="left:412px;top:486.8px;width:23.30000000000001px;height:13.099999999999966px;background:#2b2b2b;border:0.6px solid #262626;border-radius:1px"></div>
<div class="t" style="left:423.65px;transform:translateX(-50%);top:490.50px;font-size:6.5px;color:#a4a4a4;font-family:'Liberation Sans', sans-serif;">UDP</div>
<div class="a" style="left:436.8px;top:486.8px;width:22.899999999999977px;height:13.099999999999966px;background:#2b2b2b;border:0.6px solid #262626;border-radius:1px"></div>
<div class="t" style="left:448.25px;transform:translateX(-50%);top:490.50px;font-size:6.5px;color:#a4a4a4;font-family:'Liberation Sans', sans-serif;">Rec</div>
<div class="a" style="left:461.2px;top:486.8px;width:23.19999999999999px;height:13.099999999999966px;background:#2b2b2b;border:0.6px solid #262626;border-radius:1px"></div>
<div class="t" style="left:472.80px;transform:translateX(-50%);top:490.50px;font-size:6.5px;color:#a4a4a4;font-family:'Liberation Sans', sans-serif;">Play</div>
<div class="a" style="left:485.5px;top:486.8px;width:23.80000000000001px;height:13.099999999999966px;background:#2b2b2b;border:0.6px solid #262626;border-radius:1px"></div>
<div class="t" style="left:497.40px;transform:translateX(-50%);top:490.50px;font-size:6.5px;color:#a4a4a4;font-family:'Liberation Sans', sans-serif;">...</div>
<div class="t" style="left:448.50px;transform:translateX(-50%);top:503.17px;font-size:6.3px;color:#9a9a9a;font-family:'Liberation Sans', sans-serif;font-style:italic;">DSP</div>
<div class="a" style="left:384px;top:513px;width:129px;height:11px;background:#323232"></div>
<div class="a" style="left:390px;top:5px;width:596px;height:378px;background:#efefef"></div>
<div class="a" style="left:390px;top:5px;width:596px;height:15px;background:#31363b"></div>
<div class="t" style="left:688.00px;transform:translateX(-50%);top:9.34px;font-size:7.4px;color:#c6c8cb;font-weight:bold;font-family:'Liberation Sans', sans-serif;">Horus Telemetry GUI - v0.2.3</div>
<svg width="1024" height="538" style="pointer-events:none"><line x1="942.5" y1="12.6" x2="946.5" y2="12.6" stroke="#c8c8c8" stroke-width="0.9"/><polyline points="959.2,12.4 959.2,14.1 960.9,14.1" stroke="#b8b8b8" stroke-width="0.7" fill="none"/><polyline points="961,10.8 962.7,10.8 962.7,12.5" stroke="#b8b8b8" stroke-width="0.7" fill="none"/><line x1="959.7" y1="13.6" x2="962.2" y2="11.3" stroke="#b8b8b8" stroke-width="0.6"/><circle cx="976.8" cy="12.4" r="4.1" fill="#e5614f"/><line x1="975.2" y1="10.8" x2="978.4" y2="14" stroke="#5a2a24" stroke-width="0.9"/><line x1="978.4" y1="10.8" x2="975.2" y2="14" stroke="#5a2a24" stroke-width="0.9"/></svg>
<div class="a" style="left:392px;top:19px;width:160px;height:55px;border:1px solid #a9a9a9;border-radius:1.5px;box-shadow:1px 1px 0 #fbfbfb"></div>
<div class="a" style="left:390px;top:20px;width:5px;height:53.5px;background:#6a65cf"></div>
<div class="t" style="left:399.80px;top:27.30px;font-size:6.5px;color:#1c1c1c;font-weight:bold;-webkit-text-stroke:0.22px #1c1c1c;font-family:'Liberation Sans', sans-serif;">Audio Device:</div>
<div class="t" style="left:399.80px;top:41.20px;font-size:6.5px;color:#1c1c1c;font-weight:bold;-webkit-text-stroke:0.22px #1c1c1c;font-family:'Liberation Sans', sans-serif;">Sample Rate (Hz):</div>
<div class="t" style="left:399.80px;top:57.70px;font-size:6.5px;color:#1c1c1c;font-weight:bold;-webkit-text-stroke:0.22px #1c1c1c;font-family:'Liberation Sans', sans-serif;">Input Level (dBFS):</div>
<div class="a" style="left:462.6px;top:24.9px;width:84.89999999999998px;height:10.399999999999999px;background:linear-gradient(#f3f3f3,#ebebeb);border:0.6px solid #dcdcdc;border-radius:1.5px"></div>
<div class="t" style="left:463.80px;top:27.40px;font-size:6.5px;color:#bdbdbd;font-family:'Liberation Sans', sans-serif;">pulse</div>
<svg width="1024" height="538" style="pointer-events:none"><polygon points="539.5,29.099999999999998 543.5,29.099999999999998 541.5,31.4" fill="#c4c4c4"/></svg>
<div class="a" style="left:462.6px;top:39px;width:84.89999999999998px;height:10.5px;background:linear-gradient(#f3f3f3,#ebebeb);border:0.6px solid #dcdcdc;border-radius:1.5px"></div>
<div class="t" style="left:463.80px;top:41.60px;font-size:6.5px;color:#bdbdbd;font-family:'Liberation Sans', sans-serif;">48000</div>
<svg width="1024" height="538" style="pointer-events:none"><polygon points="539.5,43.25 543.5,43.25 541.5,45.55" fill="#c4c4c4"/></svg>
<div class="t" style="left:462.60px;top:57.70px;font-size:6.5px;color:#2a2a2a;-webkit-text-stroke:0.1px #2a2a2a;font-family:'Liberation Sans', sans-serif;">-inf</div>
<div class="t" style="left:489.90px;top:57.70px;font-size:6.5px;color:#1c1c1c;font-family:'Liberation Sans', sans-serif;">LOW</div>
<div class="a" style="left:392px;top:75px;width:160px;height:91px;border:1px solid #a9a9a9;border-radius:1.5px;box-shadow:1px 1px 0 #fbfbfb"></div>
<div class="a" style="left:390px;top:75.5px;width:5px;height:89.5px;background:#6a65cf"></div>
<div class="a" style="left:390px;top:73.5px;width:5px;height:2.0px;background:#f6f6f6"></div>
<div class="t" style="left:399.90px;top:82.75px;font-size:6.5px;color:#1c1c1c;font-weight:bold;-webkit-text-stroke:0.22px #1c1c1c;font-family:'Liberation Sans', sans-serif;">Mode:</div>
<div class="t" style="left:399.90px;top:96.90px;font-size:6.5px;color:#1c1c1c;font-weight:bold;-webkit-text-stroke:0.22px #1c1c1c;font-family:'Liberation Sans', sans-serif;">Baudrate:</div>
<div class="t" style="left:399.90px;top:110.30px;font-size:6.5px;color:#1c1c1c;font-weight:bold;-webkit-text-stroke:0.22px #1c1c1c;font-family:'Liberation Sans', sans-serif;">Enable Mask Estim.:</div>
<div class="t" style="left:399.90px;top:123.60px;font-size:6.5px;color:#1c1c1c;font-weight:bold;-webkit-text-stroke:0.22px #1c1c1c;font-family:'Liberation Sans', sans-serif;">Tone Spacing (Hz):</div>
<div class="t" style="left:399.90px;top:137.00px;font-size:6.5px;color:#1c1c1c;font-weight:bold;-webkit-text-stroke:0.22px #1c1c1c;font-family:'Liberation Sans', sans-serif;">Manual Estim. Limits:</div>
<div class="a" style="left:471.6px;top:81px;width:75.89999999999998px;height:9.700000000000003px;background:linear-gradient(#f3f3f3,#ebebeb);border:0.6px solid #dcdcdc;border-radius:1.5px"></div>
<div class="t" style="left:472.80px;top:82.80px;font-size:6.5px;color:#bdbdbd;font-family:'Liberation Sans', sans-serif;">Horus Binary v1/v2</div>
<svg width="1024" height="538" style="pointer-events:none"><polygon points="539.5,84.85 543.5,84.85 541.5,87.14999999999999" fill="#c4c4c4"/></svg>
<div class="a" style="left:471.6px;top:94.9px;width:75.89999999999998px;height:10.399999999999991px;background:linear-gradient(#f3f3f3,#ebebeb);border:0.6px solid #dcdcdc;border-radius:1.5px"></div>
<div class="t" style="left:472.80px;top:97.40px;font-size:6.5px;color:#bdbdbd;font-family:'Liberation Sans', sans-serif;">100</div>
<svg width="1024" height="538" style="pointer-events:none"><polygon points="539.5,99.1 543.5,99.1 541.5,101.39999999999999" fill="#c4c4c4"/></svg>
<div class="a" style="left:471.6px;top:109.3px;width:7.699999999999989px;height:7.5px;background:#f0f0f0;border:0.6px solid #dadada"></div>
<svg width="1024" height="538" style="pointer-events:none"><polyline points="473.3,112.8 475,115.6 478.2,110" stroke="#b0b0b0" stroke-width="0.8" fill="none"/></svg>
<div class="a" style="left:471.6px;top:121.3px;width:75.89999999999998px;height:11.100000000000009px;background:#ececec;border:0.6px solid #d8d8d8;border-radius:1px"></div>
<div class="t" style="left:472.80px;top:124.30px;font-size:6.5px;color:#b8b8b8;font-family:'Liberation Sans', sans-serif;">270</div>
<div class="a" style="left:471.6px;top:136.4px;width:7.699999999999989px;height:7.199999999999989px;background:#ffffff;border:0.6px solid #d8d8d8"></div>
<div class="a" style="left:399.5px;top:148px;width:148.0px;height:12.199999999999989px;background:linear-gradient(#fafafa,#f0f0f0);border:0.7px solid #c4c4c4;border-radius:1.5px"></div>
<div class="t" style="left:473.50px;transform:translateX(-50%);top:151.00px;font-size:6.5px;color:#2c2c2c;-webkit-text-stroke:0.1px #2c2c2c;font-family:'Liberation Sans', sans-serif;">Stop</div>
<div class="t" style="left:392.5px;top:47px;font-size:2.6px;color:#dcdcff;transform:translate(-50%,-50%) rotate(-90deg);">Audio</div>
<div class="t" style="left:392.5px;top:120px;font-size:2.6px;color:#dcdcff;transform:translate(-50%,-50%) rotate(-90deg);">Modem</div>
<div class="a" style="left:390px;top:166px;width:162px;height:1.3000000000000114px;background:#f8f8f8"></div>
<div class="a" style="left:390px;top:167.3px;width:81.5px;height:4.699999999999989px;background:#6d66d2"></div>
<div class="a" style="left:472px;top:167.3px;width:80px;height:4.699999999999989px;background:#3d38aa"></div>
<div class="t" style="left:431.00px;transform:translateX(-50%);top:168.83px;font-size:2.8px;color:#c8c4f0;font-family:'Liberation Sans', sans-serif;">Habitat</div>
<div class="t" style="left:512.00px;transform:translateX(-50%);top:168.83px;font-size:2.8px;color:#7f7ad0;font-family:'Liberation Sans', sans-serif;">Other</div>
<div class="a" style="left:551px;top:172px;width:1px;height:211px;background:#b0b0b0"></div>
<div class="a" style="left:552px;top:172px;width:1.5px;height:211px;background:#fbfbfb"></div>
<div class="t" style="left:395.20px;top:178.50px;font-size:6.5px;color:#1c1c1c;font-weight:bold;-webkit-text-stroke:0.22px #1c1c1c;font-family:'Liberation Sans', sans-serif;">Enable Habitat Upload:</div>
<svg width="1024" height="538" style="pointer-events:none"><polyline points="472.8,181 475.2,184.6 478.6,177.8" stroke="#111" stroke-width="1" fill="none"/></svg>
<div class="t" style="left:395.20px;top:191.50px;font-size:6.5px;color:#1c1c1c;font-weight:bold;-webkit-text-stroke:0.22px #1c1c1c;font-family:'Liberation Sans', sans-serif;">Callsign:</div>
<div class="t" style="left:395.20px;top:205.80px;font-size:6.5px;color:#1c1c1c;font-weight:bold;-webkit-text-stroke:0.22px #1c1c1c;font-family:'Liberation Sans', sans-serif;">Lat/Lon:</div>
<div class="t" style="left:395.20px;top:220.30px;font-size:6.5px;color:#1c1c1c;font-weight:bold;-webkit-text-stroke:0.22px #1c1c1c;font-family:'Liberation Sans', sans-serif;">Antenna:</div>
<div class="t" style="left:395.20px;top:234.80px;font-size:6.5px;color:#1c1c1c;font-weight:bold;-webkit-text-stroke:0.22px #1c1c1c;font-family:'Liberation Sans', sans-serif;">Radio:</div>
<div class="a" style="left:472.3px;top:189.5px;width:74.69999999999999px;height:10.599999999999994px;background:#ffffff;border:0.6px solid #d8d8d8;border-radius:1px"></div>
<div class="t" style="left:473.50px;top:192.00px;font-size:6.5px;color:#2a2a2a;-webkit-text-stroke:0.1px #2a2a2a;font-family:'Liberation Sans', sans-serif;">OH3AA</div>
<div class="a" style="left:472.3px;top:203.5px;width:35.19999999999999px;height:10.699999999999989px;background:#ffffff;border:0.6px solid #d8d8d8;border-radius:1px"></div>
<div class="t" style="left:473.50px;top:206.10px;font-size:6.5px;color:#2a2a2a;-webkit-text-stroke:0.1px #2a2a2a;font-family:'Liberation Sans', sans-serif;">60.9507</div>
<div class="a" style="left:511.4px;top:203.5px;width:35.60000000000002px;height:10.699999999999989px;background:#ffffff;border:0.6px solid #d8d8d8;border-radius:1px"></div>
<div class="t" style="left:512.60px;top:206.10px;font-size:6.5px;color:#2a2a2a;-webkit-text-stroke:0.1px #2a2a2a;font-family:'Liberation Sans', sans-serif;">24.4837</div>
<div class="a" style="left:472.3px;top:218px;width:74.69999999999999px;height:10.5px;background:#ffffff;border:0.6px solid #d8d8d8;border-radius:1px"></div>
<div class="t" style="left:473.50px;top:220.40px;font-size:6.5px;color:#2a2a2a;-webkit-text-stroke:0.1px #2a2a2a;font-family:'Liberation Sans', sans-serif;">Mobile whip</div>
<div class="a" style="left:472.3px;top:232.5px;width:74.69999999999999px;height:10.5px;background:#ffffff;border:0.6px solid #d8d8d8;border-radius:1px"></div>
<div class="t" style="left:473.50px;top:234.90px;font-size:6.5px;color:#2a2a2a;-webkit-text-stroke:0.1px #2a2a2a;font-family:'Liberation Sans', sans-serif;">NooElec RTL-SDR</div>
<div class="a" style="left:395.5px;top:246.2px;width:152.0px;height:13.400000000000034px;background:linear-gradient(#fafafa,#f0f0f0);border:0.7px solid #93b4d8;border-radius:1.5px"></div>
<div class="t" style="left:471.50px;transform:translateX(-50%);top:249.80px;font-size:6.5px;color:#2c2c2c;-webkit-text-stroke:0.1px #2c2c2c;font-family:'Liberation Sans', sans-serif;">Upload Position</div>
<div class="a" style="left:395.6px;top:365.4px;width:151.79999999999995px;height:13.300000000000011px;background:linear-gradient(#fafafa,#f0f0f0);border:0.7px solid #c4c4c4;border-radius:1.5px"></div>
<div class="t" style="left:471.50px;transform:translateX(-50%);top:368.95px;font-size:6.5px;color:#2c2c2c;-webkit-text-stroke:0.1px #2c2c2c;font-family:'Liberation Sans', sans-serif;">Save Settings</div>
<div class="a" style="left:554px;top:20px;width:5px;height:124px;background:#6a65cf"></div>
<div class="a" style="left:559px;top:20px;width:427px;height:124px;background:#000"></div>
<div class="a" style="left:554px;top:144px;width:432px;height:2px;background:#f8f8f8"></div>
<svg width="1024" height="538" style="pointer-events:none"><line x1="587.6" y1="28.3" x2="587.6" y2="127.3" stroke="#262626" stroke-width="0.6"/><line x1="606.7" y1="28.3" x2="606.7" y2="127.3" stroke="#262626" stroke-width="0.6"/><line x1="625.8" y1="28.3" x2="625.8" y2="127.3" stroke="#262626" stroke-width="0.6"/><line x1="644.9" y1="28.3" x2="644.9" y2="127.3" stroke="#262626" stroke-width="0.6"/><line x1="664.0" y1="28.3" x2="664.0" y2="127.3" stroke="#262626" stroke-width="0.6"/><line x1="683.1" y1="28.3" x2="683.1" y2="127.3" stroke="#262626" stroke-width="0.6"/><line x1="702.2" y1="28.3" x2="702.2" y2="127.3" stroke="#262626" stroke-width="0.6"/><line x1="721.3" y1="28.3" x2="721.3" y2="127.3" stroke="#262626" stroke-width="0.6"/><line x1="740.4" y1="28.3" x2="740.4" y2="127.3" stroke="#262626" stroke-width="0.6"/><line x1="759.5" y1="28.3" x2="759.5" y2="127.3" stroke="#262626" stroke-width="0.6"/><line x1="778.6" y1="28.3" x2="778.6" y2="127.3" stroke="#262626" stroke-width="0.6"/><line x1="797.7" y1="28.3" x2="797.7" y2="127.3" stroke="#262626" stroke-width="0.6"/><line x1="816.8" y1="28.3" x2="816.8" y2="127.3" stroke="#262626" stroke-width="0.6"/><line x1="835.9" y1="28.3" x2="835.9" y2="127.3" stroke="#262626" stroke-width="0.6"/><line x1="855.0" y1="28.3" x2="855.0" y2="127.3" stroke="#262626" stroke-width="0.6"/><line x1="874.1" y1="28.3" x2="874.1" y2="127.3" stroke="#262626" stroke-width="0.6"/><line x1="893.2" y1="28.3" x2="893.2" y2="127.3" stroke="#262626" stroke-width="0.6"/><line x1="912.3" y1="28.3" x2="912.3" y2="127.3" stroke="#262626" stroke-width="0.6"/><line x1="931.4" y1="28.3" x2="931.4" y2="127.3" stroke="#262626" stroke-width="0.6"/><line x1="950.5" y1="28.3" x2="950.5" y2="127.3" stroke="#262626" stroke-width="0.6"/><line x1="969.6" y1="28.3" x2="969.6" y2="127.3" stroke="#262626" stroke-width="0.6"/><line x1="582.3" y1="37.8" x2="986" y2="37.8" stroke="#262626" stroke-width="0.6"/><line x1="582.3" y1="49.9" x2="986" y2="49.9" stroke="#262626" stroke-width="0.6"/><line x1="582.3" y1="62.1" x2="986" y2="62.1" stroke="#262626" stroke-width="0.6"/><line x1="582.3" y1="74.2" x2="986" y2="74.2" stroke="#262626" stroke-width="0.6"/><line x1="582.3" y1="86.4" x2="986" y2="86.4" stroke="#262626" stroke-width="0.6"/><line x1="582.3" y1="98.5" x2="986" y2="98.5" stroke="#262626" stroke-width="0.6"/><line x1="582.3" y1="110.7" x2="986" y2="110.7" stroke="#262626" stroke-width="0.6"/><line x1="582.3" y1="122.8" x2="986" y2="122.8" stroke="#262626" stroke-width="0.6"/><line x1="582.3" y1="28.3" x2="582.3" y2="127.3" stroke="#9a9a9a" stroke-width="0.7"/><line x1="582.3" y1="127.3" x2="986" y2="127.3" stroke="#9a9a9a" stroke-width="0.7"/><polyline points="597.1,96.7 598.0,95.0 598.8,97.9 599.6,93.6 600.4,111.2 601.2,99.1 602.0,93.9 602.8,96.5 603.6,88.3 604.5,95.9 605.3,99.4 606.1,99.3 606.9,92.9 607.7,109.3 608.5,93.5 609.3,93.4 610.1,100.5 610.9,111.9 611.8,97.9 612.6,92.9 613.4,94.2 614.2,101.6 615.0,98.5 615.8,99.8 616.6,96.0 617.4,91.3 618.3,100.4 619.1,95.5 619.9,113.0 620.7,97.5 621.5,101.6 622.3,97.8 623.1,97.1 623.9,93.5 624.7,96.9 625.6,96.0 626.4,100.1 627.2,99.9 628.0,95.4 628.8,102.6 629.6,100.5 630.4,103.5 631.2,89.4 632.1,97.9 632.9,100.4 633.7,97.1 634.5,96.6 635.3,96.2 636.1,111.4 636.9,96.5 637.7,108.1 638.5,96.1 639.4,91.8 640.2,97.5 641.0,93.1 641.8,105.5 642.6,93.8 643.4,101.5 644.2,100.4 645.0,94.8 645.9,99.1 646.7,111.1 647.5,95.9 648.3,96.7 649.1,93.9 649.9,99.8 650.7,95.8 651.5,103.3 652.3,97.9 653.2,95.6 654.0,93.4 654.8,93.3 655.6,95.7 656.4,94.2 657.2,111.3 658.0,99.8 658.8,106.1 659.7,116.4 660.5,93.5 661.3,91.3 662.1,96.0 662.9,94.8 663.7,93.4 664.5,97.1 665.3,94.1 666.1,95.9 667.0,96.2 667.8,103.5 668.6,115.0 669.4,95.8 670.2,96.8 671.0,98.8 671.8,89.8 672.6,92.4 673.5,95.3 674.3,95.2 675.1,97.9 675.9,95.0 676.7,91.4 677.5,93.5 678.3,92.4 679.1,99.0 679.9,97.0 680.8,91.8 681.6,91.0 682.4,92.1 683.2,89.6 684.0,97.3 684.8,96.7 685.6,99.0 686.4,93.2 687.3,86.3 688.1,89.5 688.9,109.3 689.7,106.3 690.5,98.7 691.3,87.7 692.1,111.8 692.9,92.8 693.7,94.0 694.6,92.8 695.4,93.8 696.2,105.4 697.0,84.9 697.8,92.8 698.6,91.9 699.4,93.4 700.2,89.1 701.1,88.0 701.9,86.2 702.7,87.8 703.5,88.4 704.3,87.9 705.1,100.8 705.9,99.6 706.7,97.3 707.5,91.9 708.4,98.3 709.2,89.7 710.0,86.7 710.8,84.5 711.6,82.1 712.4,87.1 713.2,99.0 714.0,78.0 714.9,97.6 715.7,78.5 716.5,76.2 717.3,73.0 718.1,67.6 718.9,78.0 719.7,70.0 720.5,63.6 721.3,67.4 722.2,67.5 723.0,71.0 723.8,63.4 724.6,70.4 725.4,86.8 726.2,75.7 727.0,70.3 727.8,73.6 728.7,73.2 729.5,72.0 730.3,73.9 731.1,82.6 731.9,77.6 732.7,74.0 733.5,72.8 734.3,84.9 735.1,85.2 736.0,83.2 736.8,84.2 737.6,82.3 738.4,74.2 739.2,78.0 740.0,70.7 740.8,73.0 741.6,79.0 742.5,70.6 743.3,71.5 744.1,69.5 744.9,76.7 745.7,57.2 746.5,57.2 747.3,57.2 748.1,57.2 748.9,57.4 749.8,64.2 750.6,68.0 751.4,66.5 752.2,65.4 753.0,71.1 753.8,84.4 754.6,78.8 755.4,78.2 756.3,73.3 757.1,91.2 757.9,81.8 758.7,81.0 759.5,78.6 760.3,73.6 761.1,75.2 761.9,76.3 762.7,79.5 763.6,74.8 764.4,76.7 765.2,79.2 766.0,72.0 766.8,65.0 767.6,66.8 768.4,70.0 769.2,65.8 770.1,63.5 770.9,60.5 771.7,58.6 772.5,57.6 773.3,57.2 774.1,59.1 774.9,57.2 775.7,62.4 776.5,64.9 777.4,63.4 778.2,80.2 779.0,74.9 779.8,75.7 780.6,78.5 781.4,73.5 782.2,80.9 783.0,74.7 783.9,82.2 784.7,94.6 785.5,83.9 786.3,81.1 787.1,78.0 787.9,78.4 788.7,80.7 789.5,83.2 790.3,74.5 791.2,72.0 792.0,81.1 792.8,69.3 793.6,68.1 794.4,70.1 795.2,64.7 796.0,60.7 796.8,57.2 797.7,63.1 798.5,58.2 799.3,57.2 800.1,60.4 800.9,66.8 801.7,72.4 802.5,92.0 803.3,74.8 804.1,82.7 805.0,82.0 805.8,77.2 806.6,82.1 807.4,93.9 808.2,92.3 809.0,104.5 809.8,88.6 810.6,86.4 811.5,92.2 812.3,86.2 813.1,91.7 813.9,90.4 814.7,90.7 815.5,87.5 816.3,100.0 817.1,89.8 817.9,93.4 818.8,87.2 819.6,96.3 820.4,90.0 821.2,92.6 822.0,87.7 822.8,94.8 823.6,91.8 824.4,89.4 825.3,88.6 826.1,86.2 826.9,94.0 827.7,94.1 828.5,90.0 829.3,96.3 830.1,90.1 830.9,91.7 831.7,97.1 832.6,88.4 833.4,97.9 834.2,98.0 835.0,93.1 835.8,95.1 836.6,96.0 837.4,96.0 838.2,101.9 839.1,93.2 839.9,106.0 840.7,94.3 841.5,90.1 842.3,106.9 843.1,90.2 843.9,88.9 844.7,101.0 845.5,95.3 846.4,98.4 847.2,90.8 848.0,94.6 848.8,103.9 849.6,88.1 850.4,110.4 851.2,91.7 852.0,97.1 852.9,95.3 853.7,94.9 854.5,112.2 855.3,94.4 856.1,91.3 856.9,92.0 857.7,99.6 858.5,93.5 859.3,90.8 860.2,104.0 861.0,101.0 861.8,98.3 862.6,92.4 863.4,100.3 864.2,99.6 865.0,89.3 865.8,91.1 866.7,107.2 867.5,90.2 868.3,104.3 869.1,93.1 869.9,86.5 870.7,90.7 871.5,96.3 872.3,95.0 873.1,98.5 874.0,91.7 874.8,110.5 875.6,106.2 876.4,94.6 877.2,91.4 878.0,96.6 878.8,91.0 879.6,93.5 880.5,90.8 881.3,95.6 882.1,96.6 882.9,95.4 883.7,89.6 884.5,93.6 885.3,98.1 886.1,97.7 886.9,101.3 887.8,89.4 888.6,90.8 889.4,97.1 890.2,91.8 891.0,90.6 891.8,105.8 892.6,91.6 893.4,94.1 894.3,97.6 895.1,93.9 895.9,93.4 896.7,90.3 897.5,94.8 898.3,95.8 899.1,91.0 899.9,93.4 900.7,98.4 901.6,102.3 902.4,91.3 903.2,96.5 904.0,90.9 904.8,92.5 905.6,94.6 906.4,93.2 907.2,93.4 908.1,91.6 908.9,92.8 909.7,88.3 910.5,112.1 911.3,98.3 912.1,99.9 912.9,92.9 913.7,98.3 914.5,97.2 915.4,92.0 916.2,89.8 917.0,100.3 917.8,89.0 918.6,92.6 919.4,99.4 920.2,91.3 921.0,91.6 921.9,107.2 922.7,97.1 923.5,93.6 924.3,102.2 925.1,96.0 925.9,100.9 926.7,96.9 927.5,98.5 928.3,92.6 929.2,112.2 930.0,94.3 930.8,96.0 931.6,92.7 932.4,96.8 933.2,93.1 934.0,96.7 934.8,91.9 935.6,94.8 936.5,93.5 937.3,96.2 938.1,91.5 938.9,92.3 939.7,90.3 940.5,94.8 941.3,94.7 942.1,91.6 943.0,91.1 943.8,90.6 944.6,96.3 945.4,96.4 946.2,100.5 947.0,108.9 947.8,100.3 948.6,88.7 949.4,95.6 950.3,92.5 951.1,104.0 951.9,89.2 952.7,94.0 953.5,97.7 954.3,90.2 955.1,91.3 955.9,89.4 956.8,95.9 957.6,96.7 958.4,93.3 959.2,110.3 960.0,110.8 960.8,97.6 961.6,95.0 962.4,95.4 963.2,100.4 964.1,94.3 964.9,94.4 965.7,94.0 966.5,95.3 967.3,91.2 968.1,93.1 968.9,99.2" stroke="#a8a8a8" stroke-width="0.55" fill="none"/><line x1="721.3" y1="28.3" x2="721.3" y2="127.3" stroke="#e0e0e0" stroke-width="0.7" stroke-dasharray="1.4,1"/><line x1="746.8" y1="28.3" x2="746.8" y2="127.3" stroke="#e0e0e0" stroke-width="0.7" stroke-dasharray="1.4,1"/><line x1="772.3" y1="28.3" x2="772.3" y2="127.3" stroke="#e0e0e0" stroke-width="0.7" stroke-dasharray="1.4,1"/><line x1="797.5" y1="28.3" x2="797.5" y2="127.3" stroke="#e0e0e0" stroke-width="0.7" stroke-dasharray="1.4,1"/></svg>
<div class="t" style="left:722.30px;top:34.27px;font-size:6.3px;color:#d0d0d0;font-family:'Liberation Sans', sans-serif;">F1</div>
<div class="t" style="left:747.80px;top:34.27px;font-size:6.3px;color:#d0d0d0;font-family:'Liberation Sans', sans-serif;">F2</div>
<div class="t" style="left:773.30px;top:34.27px;font-size:6.3px;color:#d0d0d0;font-family:'Liberation Sans', sans-serif;">F3</div>
<div class="t" style="right:227.50px;top:34.27px;font-size:6.3px;color:#d0d0d0;font-family:'Liberation Sans', sans-serif;">F4</div>
<div class="t" style="right:443.00px;top:46.70px;font-size:6.5px;color:#c8c8c8;font-family:'Liberation Sans', sans-serif;">-40</div>
<div class="t" style="right:443.00px;top:71.00px;font-size:6.5px;color:#c8c8c8;font-family:'Liberation Sans', sans-serif;">-60</div>
<div class="t" style="right:443.00px;top:95.30px;font-size:6.5px;color:#c8c8c8;font-family:'Liberation Sans', sans-serif;">-80</div>
<div class="t" style="right:443.00px;top:119.60px;font-size:6.5px;color:#c8c8c8;font-family:'Liberation Sans', sans-serif;">-100</div>
<div class="t" style="left:587.60px;transform:translateX(-50%);top:128.40px;font-size:6.5px;color:#c8c8c8;font-family:'Liberation Sans', sans-serif;">0</div>
<div class="t" style="left:683.10px;transform:translateX(-50%);top:128.40px;font-size:6.5px;color:#c8c8c8;font-family:'Liberation Sans', sans-serif;">1</div>
<div class="t" style="left:778.60px;transform:translateX(-50%);top:128.40px;font-size:6.5px;color:#c8c8c8;font-family:'Liberation Sans', sans-serif;">2</div>
<div class="t" style="left:874.10px;transform:translateX(-50%);top:128.40px;font-size:6.5px;color:#c8c8c8;font-family:'Liberation Sans', sans-serif;">3</div>
<div class="t" style="left:969.60px;transform:translateX(-50%);top:128.40px;font-size:6.5px;color:#c8c8c8;font-family:'Liberation Sans', sans-serif;">4</div>
<div class="t" style="left:783.60px;transform:translateX(-50%);top:136.71px;font-size:6.6px;color:#b8b8b8;font-family:'Liberation Sans', sans-serif;">Frequency (kHz)</div>
<div class="t" style="left:784.50px;transform:translateX(-50%);top:20.87px;font-size:7.6px;color:#b8b8b8;font-family:'Liberation Sans', sans-serif;">Spectra</div>
<div class="t" style="left:563.6px;top:77.8px;font-size:6.5px;color:#c0c0c0;transform:translate(-50%,-50%) rotate(-90deg);">Power (dBFs)</div>
<div class="t" style="left:556.5px;top:82px;font-size:2.6px;color:#dcdcff;transform:translate(-50%,-50%) rotate(-90deg);">Spectrum</div>
<div class="a" style="left:554px;top:146px;width:46px;height:108px;background:#ededed;border:0.8px solid #b8b8b8;border-radius:1.5px"></div>
<div class="a" style="left:554px;top:146.2px;width:46px;height:4.800000000000011px;background:#6b66cf"></div>
<div class="t" style="left:577.00px;transform:translateX(-50%);top:147.93px;font-size:2.8px;color:#d8d6f6;font-family:'Liberation Sans', sans-serif;">SNR (dB)</div>
<div class="a" style="left:571.5px;top:155.7px;width:10.899999999999977px;height:14.300000000000011px;background:#ffffff;border:0.5px solid #dcdcdc"></div>
<div class="a" style="left:571.5px;top:170px;width:10.899999999999977px;height:63.400000000000006px;background:#36a2de"></div>
<div class="t" style="left:576.70px;transform:translateX(-50%);top:237.41px;font-size:10.5px;color:#333333;font-family:'Liberation Mono', monospace;-webkit-text-stroke:0.25px #333;">10.2</div>
<div class="a" style="left:602px;top:146px;width:4px;height:107px;background:#6a65cf"></div>
<div class="t" style="left:604px;top:196px;font-size:2.6px;color:#dcdcff;transform:translate(-50%,-50%) rotate(-90deg);">SNR Plot</div>
<div class="a" style="left:606px;top:146px;width:380px;height:107px;background:#000"></div>
<div class="a" style="left:554px;top:253px;width:432px;height:2.5px;background:#efefef"></div>
<svg width="1024" height="538" style="pointer-events:none"><line x1="629.2" y1="154.5" x2="629.2" y2="236.4" stroke="#202020" stroke-width="0.6"/><line x1="640.2" y1="154.5" x2="640.2" y2="236.4" stroke="#202020" stroke-width="0.6"/><line x1="651.2" y1="154.5" x2="651.2" y2="236.4" stroke="#202020" stroke-width="0.6"/><line x1="662.3" y1="154.5" x2="662.3" y2="236.4" stroke="#202020" stroke-width="0.6"/><line x1="673.4" y1="154.5" x2="673.4" y2="236.4" stroke="#202020" stroke-width="0.6"/><line x1="684.4" y1="154.5" x2="684.4" y2="236.4" stroke="#202020" stroke-width="0.6"/><line x1="695.5" y1="154.5" x2="695.5" y2="236.4" stroke="#202020" stroke-width="0.6"/><line x1="706.5" y1="154.5" x2="706.5" y2="236.4" stroke="#202020" stroke-width="0.6"/><line x1="717.6" y1="154.5" x2="717.6" y2="236.4" stroke="#202020" stroke-width="0.6"/><line x1="728.6" y1="154.5" x2="728.6" y2="236.4" stroke="#202020" stroke-width="0.6"/><line x1="739.7" y1="154.5" x2="739.7" y2="236.4" stroke="#202020" stroke-width="0.6"/><line x1="750.7" y1="154.5" x2="750.7" y2="236.4" stroke="#202020" stroke-width="0.6"/><line x1="761.8" y1="154.5" x2="761.8" y2="236.4" stroke="#202020" stroke-width="0.6"/><line x1="772.8" y1="154.5" x2="772.8" y2="236.4" stroke="#202020" stroke-width="0.6"/><line x1="783.9" y1="154.5" x2="783.9" y2="236.4" stroke="#202020" stroke-width="0.6"/><line x1="794.9" y1="154.5" x2="794.9" y2="236.4" stroke="#202020" stroke-width="0.6"/><line x1="806.0" y1="154.5" x2="806.0" y2="236.4" stroke="#202020" stroke-width="0.6"/><line x1="817.0" y1="154.5" x2="817.0" y2="236.4" stroke="#202020" stroke-width="0.6"/><line x1="828.1" y1="154.5" x2="828.1" y2="236.4" stroke="#202020" stroke-width="0.6"/><line x1="839.1" y1="154.5" x2="839.1" y2="236.4" stroke="#202020" stroke-width="0.6"/><line x1="850.2" y1="154.5" x2="850.2" y2="236.4" stroke="#202020" stroke-width="0.6"/><line x1="861.2" y1="154.5" x2="861.2" y2="236.4" stroke="#202020" stroke-width="0.6"/><line x1="872.2" y1="154.5" x2="872.2" y2="236.4" stroke="#202020" stroke-width="0.6"/><line x1="883.3" y1="154.5" x2="883.3" y2="236.4" stroke="#202020" stroke-width="0.6"/><line x1="894.4" y1="154.5" x2="894.4" y2="236.4" stroke="#202020" stroke-width="0.6"/><line x1="905.4" y1="154.5" x2="905.4" y2="236.4" stroke="#202020" stroke-width="0.6"/><line x1="916.5" y1="154.5" x2="916.5" y2="236.4" stroke="#202020" stroke-width="0.6"/><line x1="927.5" y1="154.5" x2="927.5" y2="236.4" stroke="#202020" stroke-width="0.6"/><line x1="938.6" y1="154.5" x2="938.6" y2="236.4" stroke="#202020" stroke-width="0.6"/><line x1="949.6" y1="154.5" x2="949.6" y2="236.4" stroke="#202020" stroke-width="0.6"/><line x1="960.7" y1="154.5" x2="960.7" y2="236.4" stroke="#202020" stroke-width="0.6"/><line x1="971.7" y1="154.5" x2="971.7" y2="236.4" stroke="#202020" stroke-width="0.6"/><line x1="982.8" y1="154.5" x2="982.8" y2="236.4" stroke="#202020" stroke-width="0.6"/><line x1="626.8" y1="236.8" x2="986" y2="236.8" stroke="#262626" stroke-width="0.6"/><line x1="626.8" y1="232.4" x2="986" y2="232.4" stroke="#181818" stroke-width="0.6"/><line x1="626.8" y1="228.0" x2="986" y2="228.0" stroke="#181818" stroke-width="0.6"/><line x1="626.8" y1="223.6" x2="986" y2="223.6" stroke="#181818" stroke-width="0.6"/><line x1="626.8" y1="219.2" x2="986" y2="219.2" stroke="#181818" stroke-width="0.6"/><line x1="626.8" y1="214.8" x2="986" y2="214.8" stroke="#262626" stroke-width="0.6"/><line x1="626.8" y1="210.4" x2="986" y2="210.4" stroke="#181818" stroke-width="0.6"/><line x1="626.8" y1="206.0" x2="986" y2="206.0" stroke="#181818" stroke-width="0.6"/><line x1="626.8" y1="201.6" x2="986" y2="201.6" stroke="#181818" stroke-width="0.6"/><line x1="626.8" y1="197.2" x2="986" y2="197.2" stroke="#181818" stroke-width="0.6"/><line x1="626.8" y1="192.8" x2="986" y2="192.8" stroke="#262626" stroke-width="0.6"/><line x1="626.8" y1="188.4" x2="986" y2="188.4" stroke="#181818" stroke-width="0.6"/><line x1="626.8" y1="184.0" x2="986" y2="184.0" stroke="#181818" stroke-width="0.6"/><line x1="626.8" y1="179.6" x2="986" y2="179.6" stroke="#181818" stroke-width="0.6"/><line x1="626.8" y1="175.2" x2="986" y2="175.2" stroke="#181818" stroke-width="0.6"/><line x1="626.8" y1="170.8" x2="986" y2="170.8" stroke="#262626" stroke-width="0.6"/><line x1="626.8" y1="166.4" x2="986" y2="166.4" stroke="#181818" stroke-width="0.6"/><line x1="626.8" y1="162.0" x2="986" y2="162.0" stroke="#181818" stroke-width="0.6"/><line x1="626.8" y1="157.6" x2="986" y2="157.6" stroke="#181818" stroke-width="0.6"/><line x1="626.8" y1="154.5" x2="626.8" y2="236.4" stroke="#9a9a9a" stroke-width="0.7"/><line x1="626.8" y1="236.4" x2="986" y2="236.4" stroke="#9a9a9a" stroke-width="0.7"/><polyline points="625.0,236.8 629.0,221.4 634.0,201.6 637.0,202.7 642.0,191.7 643.0,191.0 645.0,214.8 650.0,236.8" stroke="#c8c8c8" stroke-width="0.7" fill="none"/><polyline points="652.0,236.8 655.0,214.8 659.0,199.4 663.0,188.4 667.0,188.4 669.0,214.8 671.0,221.4 677.0,236.8" stroke="#c8c8c8" stroke-width="0.7" fill="none"/><polyline points="677.0,236.8 678.0,212.6 682.0,199.4 686.0,190.6 689.0,192.8 691.0,214.8 694.0,223.6 697.0,236.8" stroke="#c8c8c8" stroke-width="0.7" fill="none"/><polyline points="697.0,236.8 700.0,219.2 702.0,208.2 705.0,192.8 708.0,191.7 713.0,191.0 714.0,190.6 715.5,221.4 719.0,228.0 723.0,236.8" stroke="#c8c8c8" stroke-width="0.7" fill="none"/><polyline points="838.0,236.8 846.4,230.2 854.0,234.6 856.5,236.8 860.0,232.4 863.0,235.7 866.0,236.8" stroke="#c8c8c8" stroke-width="0.7" fill="none"/><polyline points="868.9,236.8 872.0,214.8 875.0,199.4 880.0,190.6 884.0,187.3 886.0,187.3 888.0,221.4 891.0,228.0 893.0,236.8" stroke="#c8c8c8" stroke-width="0.7" fill="none"/><polyline points="894.0,236.8 896.0,221.4 899.0,225.8 903.0,197.2 905.0,188.4 908.0,186.2 909.0,214.8 913.0,236.8" stroke="#c8c8c8" stroke-width="0.7" fill="none"/><polyline points="914.0,236.8 918.0,208.2 921.0,195.0 925.0,189.5 932.0,187.3 934.0,219.2 937.0,228.0 940.0,236.8" stroke="#c8c8c8" stroke-width="0.7" fill="none"/><polyline points="941.0,236.8 944.0,210.4 946.0,199.4 950.0,192.8 954.0,189.5 956.0,219.2 959.0,228.0 962.0,236.8" stroke="#c8c8c8" stroke-width="0.7" fill="none"/><polyline points="963.0,236.8 966.0,208.2 969.0,197.2 972.0,192.8" stroke="#c8c8c8" stroke-width="0.7" fill="none"/></svg>
<div class="t" style="right:399.00px;top:167.60px;font-size:6.5px;color:#c8c8c8;font-family:'Liberation Sans', sans-serif;">20</div>
<div class="t" style="right:399.00px;top:189.60px;font-size:6.5px;color:#c8c8c8;font-family:'Liberation Sans', sans-serif;">10</div>
<div class="t" style="right:399.00px;top:211.60px;font-size:6.5px;color:#c8c8c8;font-family:'Liberation Sans', sans-serif;">0</div>
<div class="t" style="right:399.00px;top:233.60px;font-size:6.5px;color:#c8c8c8;font-family:'Liberation Sans', sans-serif;">-10</div>
<div class="a" style="left:606px;top:237px;width:20px;height:16px;background:#000"></div>
<div class="t" style="left:640.20px;transform:translateX(-50%);top:237.70px;font-size:6.5px;color:#c8c8c8;font-family:'Liberation Sans', sans-serif;">-60</div>
<div class="t" style="left:695.45px;transform:translateX(-50%);top:237.70px;font-size:6.5px;color:#c8c8c8;font-family:'Liberation Sans', sans-serif;">-50</div>
<div class="t" style="left:750.70px;transform:translateX(-50%);top:237.70px;font-size:6.5px;color:#c8c8c8;font-family:'Liberation Sans', sans-serif;">-40</div>
<div class="t" style="left:805.95px;transform:translateX(-50%);top:237.70px;font-size:6.5px;color:#c8c8c8;font-family:'Liberation Sans', sans-serif;">-30</div>
<div class="t" style="left:861.20px;transform:translateX(-50%);top:237.70px;font-size:6.5px;color:#c8c8c8;font-family:'Liberation Sans', sans-serif;">-20</div>
<div class="t" style="left:916.45px;transform:translateX(-50%);top:237.70px;font-size:6.5px;color:#c8c8c8;font-family:'Liberation Sans', sans-serif;">-10</div>
<div class="t" style="left:971.70px;transform:translateX(-50%);top:237.70px;font-size:6.5px;color:#c8c8c8;font-family:'Liberation Sans', sans-serif;">0</div>
<div class="t" style="left:805.00px;transform:translateX(-50%);top:245.70px;font-size:6.5px;color:#b8b8b8;font-family:'Liberation Sans', sans-serif;">Time (s)</div>
<div class="t" style="left:806.00px;transform:translateX(-50%);top:146.87px;font-size:7.6px;color:#b8b8b8;font-family:'Liberation Sans', sans-serif;">SNR</div>
<div class="t" style="left:611px;top:195.8px;font-size:6.5px;color:#c0c0c0;transform:translate(-50%,-50%) rotate(-90deg);">SNR (dB)</div>
<div class="a" style="left:556px;top:255.5px;width:428px;height:35.5px;border:1px solid #a9a9a9;border-radius:1.5px;box-shadow:1px 1px 0 #fbfbfb"></div>
<div class="a" style="left:554px;top:255.7px;width:5px;height:34.30000000000001px;background:#6a65cf"></div>
<div class="t" style="left:563.90px;top:262.50px;font-size:6.5px;color:#1c1c1c;font-weight:bold;-webkit-text-stroke:0.22px #1c1c1c;font-family:'Liberation Sans', sans-serif;">Latest Packet (Raw):</div>
<div class="t" style="left:563.90px;top:277.00px;font-size:6.5px;color:#1c1c1c;font-weight:bold;-webkit-text-stroke:0.22px #1c1c1c;font-family:'Liberation Sans', sans-serif;">Latest Packet (Decoded):</div>
<div class="a" style="left:645.7px;top:260.9px;width:334.5999999999999px;height:10.100000000000023px;background:#ffffff;border:0.6px solid #d8d8d8;border-radius:1px"></div>
<div class="a" style="left:645.7px;top:275px;width:334.5999999999999px;height:10.399999999999977px;background:#ffffff;border:0.6px solid #d8d8d8;border-radius:1px"></div>
<div class="t" style="left:646.90px;top:262.76px;font-size:6.43px;color:#2a2a2a;-webkit-text-stroke:0.1px #2a2a2a;font-family:'Liberation Sans', sans-serif;">0101C5010B0205157473427037C2416C0E230B0B92C50173000000000000C95B</div>
<div class="t" style="left:646.90px;top:277.16px;font-size:6.43px;color:#2a2a2a;-webkit-text-stroke:0.1px #2a2a2a;font-family:'Liberation Sans', sans-serif;">$$OH3VHH-4FSK-V2,453,11:02:05,60.86336,24.27707,3692,35,11,11,2.86*A3C8</div>
<div class="a" style="left:556px;top:292.4px;width:428px;height:35.60000000000002px;border:1px solid #a9a9a9;border-radius:1.5px;box-shadow:1px 1px 0 #fbfbfb"></div>
<div class="a" style="left:554px;top:293.3px;width:5px;height:33.69999999999999px;background:#6a65cf"></div>
<div class="t" style="left:563.50px;top:298.80px;font-size:6.5px;color:#1c1c1c;font-weight:bold;-webkit-text-stroke:0.22px #1c1c1c;font-family:'Liberation Sans', sans-serif;">Callsign</div>
<div class="t" style="left:663.70px;top:298.80px;font-size:6.5px;color:#1c1c1c;font-weight:bold;-webkit-text-stroke:0.22px #1c1c1c;font-family:'Liberation Sans', sans-serif;">Time</div>
<div class="t" style="left:721.70px;top:298.80px;font-size:6.5px;color:#1c1c1c;font-weight:bold;-webkit-text-stroke:0.22px #1c1c1c;font-family:'Liberation Sans', sans-serif;">Latitude</div>
<div class="t" style="left:780.40px;top:298.80px;font-size:6.5px;color:#1c1c1c;font-weight:bold;-webkit-text-stroke:0.22px #1c1c1c;font-family:'Liberation Sans', sans-serif;">Longitude</div>
<div class="t" style="left:838.40px;top:298.80px;font-size:6.5px;color:#1c1c1c;font-weight:bold;-webkit-text-stroke:0.22px #1c1c1c;font-family:'Liberation Sans', sans-serif;">Altitude</div>
<div class="t" style="left:872.80px;top:298.80px;font-size:6.5px;color:#1c1c1c;font-weight:bold;-webkit-text-stroke:0.22px #1c1c1c;font-family:'Liberation Sans', sans-serif;">Bearing</div>
<div class="t" style="left:910.50px;top:298.80px;font-size:6.5px;color:#1c1c1c;font-weight:bold;-webkit-text-stroke:0.22px #1c1c1c;font-family:'Liberation Sans', sans-serif;">Elevation</div>
<div class="t" style="left:944.30px;top:298.80px;font-size:6.5px;color:#1c1c1c;font-weight:bold;-webkit-text-stroke:0.22px #1c1c1c;font-family:'Liberation Sans', sans-serif;">Range (km)</div>
<div class="t" style="left:563.50px;top:309.63px;font-size:11.3px;color:#111111;font-weight:bold;-webkit-text-stroke:0.22px #111111;font-family:'Liberation Mono', monospace;">OH3VHH-4FSK-V2</div>
<div class="t" style="left:663.70px;top:309.63px;font-size:11.3px;color:#111111;font-weight:bold;-webkit-text-stroke:0.22px #111111;font-family:'Liberation Mono', monospace;">11:02:05</div>
<div class="t" style="left:721.70px;top:309.63px;font-size:11.3px;color:#111111;font-weight:bold;-webkit-text-stroke:0.22px #111111;font-family:'Liberation Mono', monospace;">60.85891</div>
<div class="t" style="left:780.40px;top:309.63px;font-size:11.3px;color:#111111;font-weight:bold;-webkit-text-stroke:0.22px #111111;font-family:'Liberation Mono', monospace;">24.27658</div>
<div class="t" style="left:838.40px;top:309.63px;font-size:11.3px;color:#111111;font-weight:bold;-webkit-text-stroke:0.22px #111111;font-family:'Liberation Mono', monospace;">3787</div>
<div class="t" style="left:872.80px;top:309.63px;font-size:11.3px;color:#111111;font-weight:bold;-webkit-text-stroke:0.22px #111111;font-family:'Liberation Mono', monospace;">227.7</div>
<div class="t" style="left:910.50px;top:309.63px;font-size:11.3px;color:#111111;font-weight:bold;-webkit-text-stroke:0.22px #111111;font-family:'Liberation Mono', monospace;">14.0</div>
<div class="t" style="left:944.30px;top:309.63px;font-size:11.3px;color:#111111;font-weight:bold;-webkit-text-stroke:0.22px #111111;font-family:'Liberation Mono', monospace;">15.6</div>
<div class="a" style="left:556px;top:329px;width:428px;height:54.5px;border:1px solid #a9a9a9;border-radius:1.5px;box-shadow:1px 1px 0 #fbfbfb"></div>
<div class="a" style="left:554px;top:329.9px;width:5px;height:52.700000000000045px;background:#6a65cf"></div>
<div class="a" style="left:563.5px;top:334.8px;width:417.5px;height:43.5px;background:#fff;border:0.6px solid #d4d4d4"></div>
<div class="t" style="left:564.80px;top:336.57px;font-size:6.53px;color:#2a2a2a;-webkit-text-stroke:0.1px #2a2a2a;font-family:'Liberation Sans', sans-serif;">13:02:55 [INFO] &nbsp;Habitat - Uploaded sentence: $$OH3VHH-4FSK-V2,457,11:02:42,60.85985,24.27665,3766,34,11,11,2.84*2E1A</div>
<div class="t" style="left:564.80px;top:345.40px;font-size:6.53px;color:#2a2a2a;-webkit-text-stroke:0.1px #2a2a2a;font-family:'Liberation Sans', sans-serif;">13:02:58 [INFO] &nbsp;Habitat - Uploaded sentence: $$OH3VHH-4FSK-V2,458,11:02:52,60.85954,24.27659,3773,28,11,11,2.86*388E</div>
<div class="t" style="left:564.80px;top:354.23px;font-size:6.53px;color:#2a2a2a;-webkit-text-stroke:0.1px #2a2a2a;font-family:'Liberation Sans', sans-serif;">13:03:03 [INFO] &nbsp;Habitat - Uploaded sentence: $$OH3VHH-4FSK-V2,459,11:02:56,60.85921,24.27659,3780,34,11,11,2.84*8241</div>
<div class="t" style="left:564.80px;top:363.06px;font-size:6.53px;color:#2a2a2a;-webkit-text-stroke:0.1px #2a2a2a;font-family:'Liberation Sans', sans-serif;">13:03:07 [INFO] &nbsp;Habitat - Uploaded sentence: $$OH3VHH-4FSK-V2,460,11:03:00,60.85891,24.27658,3787,34,11,11,2.84*8059</div>
<div class="a" style="left:974.3px;top:335.5px;width:6.2000000000000455px;height:42.30000000000001px;background:#f4f4f4;border-left:0.5px solid #e0e0e0"></div>
<div class="a" style="left:974.8px;top:342.4px;width:5.2000000000000455px;height:13.800000000000011px;background:#dcdcdc;border:0.5px solid #c8c8c8"></div>
<svg width="1024" height="538" style="pointer-events:none"><polygon points="975.6,340.6 979.2,340.6 977.4,338.4" fill="#555"/><polygon points="975.6,372.6 979.2,372.6 977.4,374.8" fill="#555"/></svg>
<div class="t" style="left:556.5px;top:273px;font-size:2.6px;color:#dcdcff;transform:translate(-50%,-50%) rotate(-90deg);">Data</div>
<div class="t" style="left:556.5px;top:310px;font-size:2.6px;color:#dcdcff;transform:translate(-50%,-50%) rotate(-90deg);">Position</div>
<div class="t" style="left:556.5px;top:356px;font-size:2.6px;color:#dcdcff;transform:translate(-50%,-50%) rotate(-90deg);">Log</div>
</body></html>
